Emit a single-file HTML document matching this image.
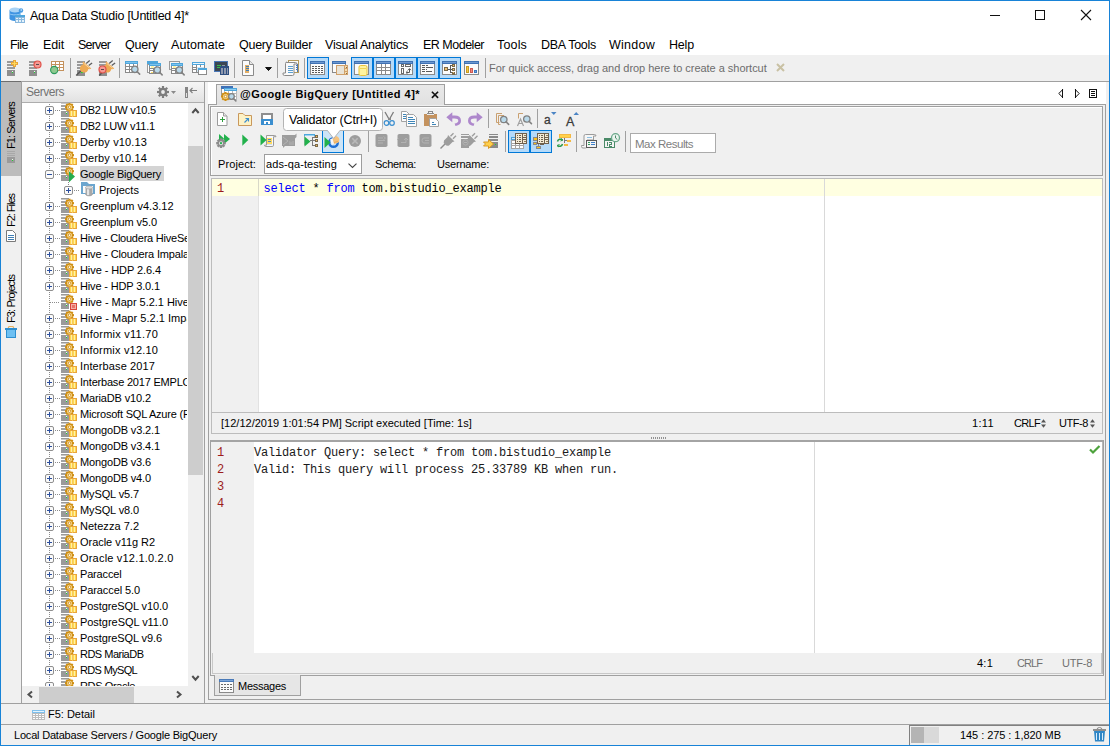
<!DOCTYPE html>
<html><head><meta charset="utf-8"><title>Aqua Data Studio</title>
<style>
*{box-sizing:border-box;margin:0;padding:0}
html,body{width:1110px;height:746px;overflow:hidden;background:#f0f0f0}
body{font-family:"Liberation Sans",sans-serif;font-size:11px;color:#000;position:relative}
.a{position:absolute}
.t{position:absolute;white-space:nowrap;line-height:16px;height:16px}
.m{font-family:"Liberation Mono",monospace}
svg{position:absolute;overflow:visible}
.sb{position:absolute;width:22px;height:22px;border:1px solid #0078d7;background:#b5daf9}
</style></head><body>

<!-- window frame -->
<div class="a" style="left:0px;top:0px;width:1110px;height:746px;background:#f0f0f0;border:1px solid #1883d7;"></div>
<div class="a" style="left:1px;top:1px;width:1108px;height:31px;background:#fff;"></div>
<svg style="left:9px;top:7px" width="16" height="16" viewBox="0 0 16 16" shape-rendering="crispEdges"><g shape-rendering="geometricPrecision"><path d="M0.500 3v8.500c0 1.400 2.400 2.500 5.500 2.500s5.500-1.100 5.500-2.500v-8.500z" fill="#3f94e2"/><ellipse cx="6" cy="3" rx="5.500" ry="2.500" fill="#a9d3f5"/><path d="M0.800 6.800c1.200 1.400 9.200 1.400 10.400 0" stroke="#9fd0f6" stroke-width="0.900" fill="none"/><circle cx="12" cy="3.500" r="2.200" fill="#4a9be0"/><circle cx="12.300" cy="3" r="0.900" fill="#a9d3f5"/></g><rect x="6" y="8" width="10" height="8" fill="#8ab8de"/><rect x="6" y="8" width="10" height="2" fill="#4ea6dc"/><rect x="7" y="11" width="2" height="1" fill="#e4f3fc"/><rect x="10" y="11" width="2" height="1" fill="#e4f3fc"/><rect x="13" y="11" width="2" height="1" fill="#e4f3fc"/><rect x="7" y="13" width="2" height="2" fill="#e4f3fc"/><rect x="10" y="13" width="2" height="2" fill="#e4f3fc"/><rect x="13" y="13" width="2" height="2" fill="#e4f3fc"/></svg>
<div class="t" style="left:30px;top:8px;font-size:12.5px;letter-spacing:-0.24px;">Aqua Data Studio [Untitled 4]*</div>
<div class="a" style="left:990px;top:15px;width:10px;height:1px;background:#111;"></div>
<div class="a" style="left:1035px;top:10px;width:10px;height:10px;border:1px solid #111;"></div>
<svg style="left:1081px;top:10px" width="10" height="10" viewBox="0 0 10 10"><path d="M0 0L10 10M10 0L0 10" stroke="#111" stroke-width="1.1" shape-rendering="geometricPrecision"/></svg>
<div class="a" style="left:1px;top:32px;width:1108px;height:23px;background:#fff;"></div>
<div class="t" style="left:10px;top:37px;font-size:12.5px;letter-spacing:-0.54px;">File</div>
<div class="t" style="left:43px;top:37px;font-size:12.5px;letter-spacing:-0.14px;">Edit</div>
<div class="t" style="left:78px;top:37px;font-size:12.5px;letter-spacing:-0.80px;">Server</div>
<div class="t" style="left:125px;top:37px;font-size:12.5px;letter-spacing:-0.21px;">Query</div>
<div class="t" style="left:171px;top:37px;font-size:12.5px;letter-spacing:0.06px;">Automate</div>
<div class="t" style="left:239px;top:37px;font-size:12.5px;letter-spacing:-0.26px;">Query Builder</div>
<div class="t" style="left:325px;top:37px;font-size:12.5px;letter-spacing:-0.23px;">Visual Analytics</div>
<div class="t" style="left:423px;top:37px;font-size:12.5px;letter-spacing:-0.50px;">ER Modeler</div>
<div class="t" style="left:497px;top:37px;font-size:12.5px;letter-spacing:0.16px;">Tools</div>
<div class="t" style="left:541px;top:37px;font-size:12.5px;letter-spacing:-0.27px;">DBA Tools</div>
<div class="t" style="left:609px;top:37px;font-size:12.5px;letter-spacing:0.26px;">Window</div>
<div class="t" style="left:669px;top:37px;font-size:12.5px;letter-spacing:-0.18px;">Help</div>
<div class="a" style="left:1px;top:55px;width:1108px;height:26px;background:#f0f0f0;"></div>
<div class="a" style="left:1px;top:81px;width:1108px;height:1px;background:#a0a0a0;"></div>
<svg style="left:7px;top:60px" width="16" height="16" viewBox="0 0 16 16" shape-rendering="crispEdges"><rect x="0" y="1" width="8" height="2" fill="#9a9a9a"/><rect x="0" y="4" width="8" height="2" fill="#9a9a9a"/><rect x="0" y="7" width="8" height="2" fill="#9a9a9a"/><rect x="0" y="10" width="8" height="6" fill="#8e8e8e"/><rect x="5" y="11" width="1" height="1" fill="#e8f8e8"/><rect x="5" y="12" width="1" height="1" fill="#1fd12f"/><rect x="6" y="0" width="3" height="7" fill="#e8a63a"/><rect x="4" y="2" width="7" height="3" fill="#e8a63a"/><rect x="7" y="1" width="1" height="5" fill="#ffd95a"/><rect x="5" y="3" width="5" height="1" fill="#ffd95a"/></svg>
<svg style="left:29px;top:60px" width="16" height="16" viewBox="0 0 16 16" shape-rendering="crispEdges"><rect x="0" y="1" width="8" height="2" fill="#9a9a9a"/><rect x="0" y="4" width="8" height="2" fill="#9a9a9a"/><rect x="0" y="7" width="8" height="2" fill="#9a9a9a"/><rect x="0" y="10" width="8" height="6" fill="#8e8e8e"/><rect x="5" y="11" width="1" height="1" fill="#e8f8e8"/><rect x="5" y="12" width="1" height="1" fill="#1fd12f"/><circle cx="8.5" cy="4.5" r="3.5" fill="#f59a94" stroke="#e0524a" stroke-width="1.2" shape-rendering="geometricPrecision"/><rect x="7.0" y="4.0" width="3" height="1" fill="#5a4a4a"/></svg>
<svg style="left:50px;top:60px" width="16" height="16" viewBox="0 0 16 16" shape-rendering="crispEdges"><rect x="1" y="1" width="13" height="10" fill="#c4915c"/><rect x="2.0" y="2.0" width="3.0" height="2.0" fill="#fff"/><rect x="2.0" y="5.0" width="3.0" height="2.0" fill="#fff"/><rect x="2.0" y="8.0" width="3.0" height="2.0" fill="#fff"/><rect x="6.0" y="2.0" width="3.0" height="2.0" fill="#fff"/><rect x="6.0" y="5.0" width="3.0" height="2.0" fill="#fff"/><rect x="6.0" y="8.0" width="3.0" height="2.0" fill="#fff"/><rect x="10.0" y="2.0" width="3.0" height="2.0" fill="#fff"/><rect x="10.0" y="5.0" width="3.0" height="2.0" fill="#fff"/><rect x="10.0" y="8.0" width="3.0" height="2.0" fill="#fff"/><circle cx="4.2" cy="10" r="3.6" fill="#8fc98f" stroke="#2c9a5c" stroke-width="1.1" shape-rendering="geometricPrecision"/></svg>
<div class="a" style="left:70px;top:58px;width:1px;height:20px;background:#a0a0a0;"></div>
<svg style="left:76px;top:60px" width="16" height="16" viewBox="0 0 16 16" shape-rendering="crispEdges"><rect x="1" y="1" width="8" height="2" fill="#9a9a9a"/><rect x="1" y="4" width="8" height="2" fill="#9a9a9a"/><rect x="1" y="7" width="8" height="2" fill="#9a9a9a"/><rect x="1" y="10" width="8" height="6" fill="#8e8e8e"/><rect x="6" y="11" width="1" height="1" fill="#e8f8e8"/><rect x="6" y="12" width="1" height="1" fill="#1fd12f"/><g shape-rendering="geometricPrecision" transform="translate(0 0)"><path d="M10.200 3.600l3.500-3M12.700 5.600l3.400-2.700" stroke="#5f5f5f" stroke-width="1.300" fill="none"/><path d="M0.200 15.500L5 10.700" stroke="#555" stroke-width="1.500" fill="none"/><path d="M7.300 1.600L15.300 8.400L13.600 9.200L12.400 9Q11.500 12.800 7.800 12.600Q4 12.300 3.900 8.600Q3.800 6 7 4.400L6.600 2.600Z" fill="#eeaa54"/><path d="M7.600 3.200L13.600 8.200" stroke="#f8d9a8" stroke-width="0.900" fill="none"/></g><rect x="5" y="12" width="1" height="1" fill="#1fd12f"/></svg>
<svg style="left:98px;top:60px" width="16" height="16" viewBox="0 0 16 16" shape-rendering="crispEdges"><rect x="1" y="1" width="8" height="2" fill="#9a9a9a"/><rect x="1" y="4" width="8" height="2" fill="#9a9a9a"/><rect x="1" y="7" width="8" height="2" fill="#9a9a9a"/><rect x="1" y="10" width="8" height="6" fill="#8e8e8e"/><rect x="6" y="11" width="1" height="1" fill="#e8f8e8"/><rect x="6" y="12" width="1" height="1" fill="#1fd12f"/><g shape-rendering="geometricPrecision" transform="translate(1 0)"><path d="M10.200 3.600l3.500-3M12.700 5.600l3.400-2.700" stroke="#5f5f5f" stroke-width="1.300" fill="none"/><path d="M0.200 15.500L5 10.700" stroke="#555" stroke-width="1.500" fill="none"/><path d="M7.300 1.600L15.300 8.400L13.600 9.200L12.400 9Q11.500 12.800 7.800 12.600Q4 12.300 3.900 8.600Q3.800 6 7 4.400L6.600 2.600Z" fill="#eeaa54"/><path d="M7.600 3.200L13.600 8.200" stroke="#f8d9a8" stroke-width="0.900" fill="none"/></g><circle cx="4.5" cy="9.5" r="3.5" fill="#f59a94" stroke="#e0524a" stroke-width="1.2" shape-rendering="geometricPrecision"/><rect x="3.0" y="9.0" width="3" height="1" fill="#5a4a4a"/></svg>
<div class="a" style="left:119px;top:58px;width:1px;height:20px;background:#a0a0a0;"></div>
<svg style="left:125px;top:60px" width="16" height="16" viewBox="0 0 16 16" shape-rendering="crispEdges"><rect x="0" y="3" width="13" height="10" fill="#8a8a8a"/><rect x="1.0" y="4.0" width="3.0" height="2.0" fill="#fff"/><rect x="1.0" y="7.0" width="3.0" height="2.0" fill="#fff"/><rect x="1.0" y="10.0" width="3.0" height="2.0" fill="#fff"/><rect x="5.0" y="4.0" width="3.0" height="2.0" fill="#fff"/><rect x="5.0" y="7.0" width="3.0" height="2.0" fill="#fff"/><rect x="5.0" y="10.0" width="3.0" height="2.0" fill="#fff"/><rect x="9.0" y="4.0" width="3.0" height="2.0" fill="#fff"/><rect x="9.0" y="7.0" width="3.0" height="2.0" fill="#fff"/><rect x="9.0" y="10.0" width="3.0" height="2.0" fill="#fff"/><rect x="0" y="1" width="13" height="3" fill="#4ea6dc"/><rect x="1" y="2" width="11" height="1" fill="#7cc2ec"/><g shape-rendering="geometricPrecision"><circle cx="9.8" cy="9.3" r="3.2" fill="#b9d9ea" stroke="#828282" stroke-width="1.3"/><path d="M12.040000000000001 11.540000000000001l2.6 2.6" stroke="#828282" stroke-width="1.6" stroke-linecap="round"/></g></svg>
<svg style="left:147px;top:60px" width="16" height="16" viewBox="0 0 16 16" shape-rendering="crispEdges"><rect x="0" y="1" width="11" height="3" fill="#4ea6dc"/><rect x="0" y="4" width="2" height="9" fill="#9a9a9a"/><rect x="1" y="5" width="1" height="7" fill="#fff"/><rect x="2" y="5" width="12" height="9" fill="#8a8a8a"/><rect x="3.0" y="6.0" width="2.6666666666666665" height="1.6666666666666665" fill="#fff"/><rect x="3.0" y="8.666666666666666" width="2.6666666666666665" height="1.6666666666666665" fill="#fff"/><rect x="3.0" y="11.333333333333332" width="2.6666666666666665" height="1.6666666666666665" fill="#fff"/><rect x="6.666666666666666" y="6.0" width="2.6666666666666665" height="1.6666666666666665" fill="#fff"/><rect x="6.666666666666666" y="8.666666666666666" width="2.6666666666666665" height="1.6666666666666665" fill="#fff"/><rect x="6.666666666666666" y="11.333333333333332" width="2.6666666666666665" height="1.6666666666666665" fill="#fff"/><rect x="10.333333333333332" y="6.0" width="2.6666666666666665" height="1.6666666666666665" fill="#fff"/><rect x="10.333333333333332" y="8.666666666666666" width="2.6666666666666665" height="1.6666666666666665" fill="#fff"/><rect x="10.333333333333332" y="11.333333333333332" width="2.6666666666666665" height="1.6666666666666665" fill="#fff"/><rect x="2" y="3" width="12" height="3" fill="#4ea6dc"/><rect x="3" y="4" width="10" height="1" fill="#7cc2ec"/><rect x="4" y="6" width="3" height="2" fill="#fff3a8"/><rect x="4" y="12" width="2" height="1" fill="#ffe066"/><g shape-rendering="geometricPrecision"><circle cx="10.3" cy="10.0" r="3.2" fill="#b9d9ea" stroke="#828282" stroke-width="1.3"/><path d="M12.540000000000001 12.24l2.6 2.6" stroke="#828282" stroke-width="1.6" stroke-linecap="round"/></g></svg>
<svg style="left:169px;top:60px" width="16" height="16" viewBox="0 0 16 16" shape-rendering="crispEdges"><rect x="0" y="1" width="11" height="9" fill="#9a9a9a"/><rect x="1" y="2" width="9" height="7" fill="#f4f4f4"/><rect x="2" y="5" width="12" height="9" fill="#8a8a8a"/><rect x="3.0" y="6.0" width="2.6666666666666665" height="1.6666666666666665" fill="#fff"/><rect x="3.0" y="8.666666666666666" width="2.6666666666666665" height="1.6666666666666665" fill="#fff"/><rect x="3.0" y="11.333333333333332" width="2.6666666666666665" height="1.6666666666666665" fill="#fff"/><rect x="6.666666666666666" y="6.0" width="2.6666666666666665" height="1.6666666666666665" fill="#fff"/><rect x="6.666666666666666" y="8.666666666666666" width="2.6666666666666665" height="1.6666666666666665" fill="#fff"/><rect x="6.666666666666666" y="11.333333333333332" width="2.6666666666666665" height="1.6666666666666665" fill="#fff"/><rect x="10.333333333333332" y="6.0" width="2.6666666666666665" height="1.6666666666666665" fill="#fff"/><rect x="10.333333333333332" y="8.666666666666666" width="2.6666666666666665" height="1.6666666666666665" fill="#fff"/><rect x="10.333333333333332" y="11.333333333333332" width="2.6666666666666665" height="1.6666666666666665" fill="#fff"/><rect x="2" y="3" width="12" height="3" fill="#4ea6dc"/><rect x="3" y="4" width="10" height="1" fill="#7cc2ec"/><rect x="4" y="6" width="3" height="2" fill="#fff3a8"/><g shape-rendering="geometricPrecision"><circle cx="10.3" cy="10.0" r="3.2" fill="#b9d9ea" stroke="#828282" stroke-width="1.3"/><path d="M12.540000000000001 12.24l2.6 2.6" stroke="#828282" stroke-width="1.6" stroke-linecap="round"/></g></svg>
<svg style="left:192px;top:60px" width="16" height="16" viewBox="0 0 16 16" shape-rendering="crispEdges"><rect x="0" y="4" width="13" height="9" fill="#8a8a8a"/><rect x="1.0" y="5.0" width="3.0" height="1.6666666666666665" fill="#fff"/><rect x="1.0" y="7.666666666666666" width="3.0" height="1.6666666666666665" fill="#fff"/><rect x="1.0" y="10.333333333333332" width="3.0" height="1.6666666666666665" fill="#fff"/><rect x="5.0" y="5.0" width="3.0" height="1.6666666666666665" fill="#fff"/><rect x="5.0" y="7.666666666666666" width="3.0" height="1.6666666666666665" fill="#fff"/><rect x="5.0" y="10.333333333333332" width="3.0" height="1.6666666666666665" fill="#fff"/><rect x="9.0" y="5.0" width="3.0" height="1.6666666666666665" fill="#fff"/><rect x="9.0" y="7.666666666666666" width="3.0" height="1.6666666666666665" fill="#fff"/><rect x="9.0" y="10.333333333333332" width="3.0" height="1.6666666666666665" fill="#fff"/><rect x="0" y="2" width="13" height="3" fill="#4ea6dc"/><rect x="1" y="3" width="11" height="1" fill="#7cc2ec"/><rect x="1" y="3" width="11" height="1" fill="#e8f4fc"/><rect x="5" y="7" width="7" height="5" fill="#cfe6f5"/><rect x="6" y="8" width="9" height="7" fill="#8a8a8a"/><rect x="7" y="10" width="7" height="4" fill="#fff"/><rect x="6" y="8" width="9" height="2" fill="#4ea6dc"/></svg>
<svg style="left:214px;top:60px" width="16" height="16" viewBox="0 0 16 16" shape-rendering="crispEdges"><rect x="0" y="1" width="14" height="11" fill="#4a78b8"/><rect x="1" y="2" width="12" height="9" fill="#3c4654"/><rect x="3" y="5" width="4" height="1" fill="#35c24a"/><rect x="3" y="7" width="4" height="1" fill="#35c24a"/><rect x="8" y="5" width="3" height="1" fill="#8a95a5"/><rect x="6" y="6" width="9" height="9" fill="#2f4f80"/><rect x="7" y="8" width="7" height="6" fill="#8e98ae"/><rect x="9" y="8" width="1" height="6" fill="#2f4f80"/><rect x="11.5" y="8" width="1" height="6" fill="#2f4f80"/></svg>
<div class="a" style="left:234px;top:58px;width:1px;height:20px;background:#a0a0a0;"></div>
<svg style="left:241px;top:60px" width="16" height="16" viewBox="0 0 16 16" shape-rendering="crispEdges"><path d="M1.5 0.5h7l4 4v11h-11z" fill="#fbfbfb" stroke="#8a8a8a" shape-rendering="geometricPrecision"/><path d="M8.5 0.5v4h4" fill="#e8e8e8" stroke="#8a8a8a" shape-rendering="geometricPrecision"/><rect x="4" y="5" width="4" height="8" fill="#e3ae66"/><rect x="5" y="6" width="3" height="1" fill="#3f7fb5"/><rect x="5" y="8" width="3" height="1" fill="#3f7fb5"/><rect x="5" y="10" width="3" height="1" fill="#3f7fb5"/></svg>
<svg style="left:265px;top:67px" width="7" height="4" viewBox="0 0 7 4" shape-rendering="crispEdges"><rect x="0" y="0" width="7" height="1" fill="#555"/><rect x="1" y="0" width="5" height="1" fill="#111"/><rect x="1" y="1" width="5" height="1" fill="#111"/><rect x="2" y="2" width="3" height="1" fill="#111"/><rect x="3" y="3" width="1" height="1" fill="#333"/></svg>
<div class="a" style="left:277px;top:58px;width:1px;height:20px;background:#a0a0a0;"></div>
<svg style="left:283px;top:60px" width="16" height="16" viewBox="0 0 16 16" shape-rendering="crispEdges"><rect x="5" y="0" width="11" height="13" fill="#b39a5c"/><rect x="6" y="1" width="9" height="11" fill="#fbfbfb"/><rect x="13" y="5" width="1" height="1" fill="#4a78b8"/><rect x="13" y="7" width="1" height="1" fill="#4a78b8"/><rect x="13" y="9" width="1" height="1" fill="#4a78b8"/><rect x="14" y="4" width="1" height="8" fill="#4a78b8"/><path d="M3.5 2.5h9q1.5 0 1.5 1.5h-3v10q0 1.5-1.5 1.5h-8q-1.5 0-1.5-1.5v-1h2.5v-9.5q0-1.5 1.5-1.5z" fill="#fafafa" stroke="#8a8a8a" shape-rendering="geometricPrecision"/><rect x="5" y="6" width="5" height="1" fill="#5b9fd0"/><rect x="5" y="8" width="5" height="1" fill="#5b9fd0"/><rect x="5" y="10" width="5" height="1" fill="#5b9fd0"/><rect x="5" y="12" width="5" height="1" fill="#5b9fd0"/></svg>
<div class="a" style="left:304px;top:58px;width:1px;height:20px;background:#a0a0a0;"></div>
<div class="sb" style="left:307px;top:57px"></div>
<div class="sb" style="left:351px;top:57px"></div>
<div class="sb" style="left:373px;top:57px"></div>
<div class="sb" style="left:395px;top:57px"></div>
<div class="sb" style="left:417px;top:57px"></div>
<div class="sb" style="left:439px;top:57px"></div>
<svg style="left:310px;top:60px" width="16" height="16" viewBox="0 0 16 16" shape-rendering="crispEdges"><rect x="0" y="1" width="15" height="14" fill="#8a8a8a"/><rect x="1" y="2" width="13" height="12" fill="#fbfbfb"/><rect x="0" y="1" width="15" height="3" fill="#3f72b4"/><rect x="1" y="2" width="13" height="1" fill="#6d98cf"/><rect x="2" y="6" width="2" height="1" fill="#5a5a5a"/><rect x="5" y="6" width="2" height="1" fill="#5a5a5a"/><rect x="8" y="6" width="2" height="1" fill="#5a5a5a"/><rect x="11" y="6" width="2" height="1" fill="#5a5a5a"/><rect x="2" y="8" width="2" height="1" fill="#5a5a5a"/><rect x="5" y="8" width="2" height="1" fill="#5a5a5a"/><rect x="8" y="8" width="2" height="1" fill="#5a5a5a"/><rect x="11" y="8" width="2" height="1" fill="#5a5a5a"/><rect x="2" y="10" width="2" height="1" fill="#5a5a5a"/><rect x="5" y="10" width="2" height="1" fill="#5a5a5a"/><rect x="8" y="10" width="2" height="1" fill="#5a5a5a"/><rect x="11" y="10" width="2" height="1" fill="#5a5a5a"/><rect x="2" y="12" width="2" height="1" fill="#5a5a5a"/><rect x="5" y="12" width="2" height="1" fill="#5a5a5a"/><rect x="8" y="12" width="2" height="1" fill="#5a5a5a"/><rect x="11" y="12" width="2" height="1" fill="#5a5a5a"/></svg>
<svg style="left:332px;top:60px" width="16" height="16" viewBox="0 0 16 16" shape-rendering="crispEdges"><rect x="0" y="1" width="14" height="12" fill="#8a8a8a"/><rect x="1" y="2" width="12" height="10" fill="#fbfbfb"/><rect x="0" y="1" width="14" height="3" fill="#3f72b4"/><rect x="1" y="2" width="12" height="1" fill="#6d98cf"/><rect x="4" y="5" width="12" height="10" fill="#d0a06a"/><rect x="5" y="6" width="7" height="8" fill="#e9e3d6"/><rect x="13" y="6" width="2" height="2" fill="#f3dcae"/><rect x="13" y="9" width="2" height="2" fill="#f3dcae"/><rect x="13" y="12" width="2" height="2" fill="#f3dcae"/><rect x="13.5" y="6.6" width="1" height="1" fill="#8a6a3a"/><rect x="13.5" y="12.6" width="1" height="1" fill="#8a6a3a"/></svg>
<svg style="left:354px;top:60px" width="16" height="16" viewBox="0 0 16 16" shape-rendering="crispEdges"><rect x="0" y="1" width="15" height="14" fill="#8a8a8a"/><rect x="1" y="2" width="13" height="12" fill="#fbfbfb"/><rect x="0" y="1" width="15" height="3" fill="#3f72b4"/><rect x="1" y="2" width="13" height="1" fill="#6d98cf"/><rect x="5" y="5.5" width="8" height="10" rx="1.6" fill="#fff4a0" stroke="#e9c43c" stroke-width="1" shape-rendering="geometricPrecision"/><rect x="6" y="8" width="6" height="1" fill="#f0d558"/></svg>
<svg style="left:376px;top:60px" width="16" height="16" viewBox="0 0 16 16" shape-rendering="crispEdges"><rect x="0" y="1" width="15" height="14" fill="#8a8a8a"/><rect x="0" y="1" width="15" height="3" fill="#3f72b4"/><rect x="1" y="2" width="13" height="1" fill="#6d98cf"/><rect x="1" y="4" width="4" height="3" fill="#fff"/><rect x="1" y="8" width="4" height="2" fill="#fff"/><rect x="1" y="11" width="4" height="3" fill="#fff"/><rect x="6" y="4" width="3" height="3" fill="#fff"/><rect x="6" y="8" width="3" height="2" fill="#fff"/><rect x="6" y="11" width="3" height="3" fill="#fff"/><rect x="10" y="4" width="4" height="3" fill="#fff"/><rect x="10" y="8" width="4" height="2" fill="#fff"/><rect x="10" y="11" width="4" height="3" fill="#fff"/></svg>
<svg style="left:398px;top:60px" width="16" height="16" viewBox="0 0 16 16" shape-rendering="crispEdges"><rect x="0" y="1" width="15" height="14" fill="#8a8a8a"/><rect x="1" y="2" width="13" height="12" fill="#fbfbfb"/><rect x="0" y="1" width="15" height="3" fill="#3f72b4"/><rect x="1" y="2" width="13" height="1" fill="#6d98cf"/><rect x="3" y="4" width="3" height="3" fill="#6a6a6a"/><rect x="4" y="5" width="1" height="1" fill="#fff"/><rect x="7" y="4" width="6" height="3" fill="#6a6a6a"/><rect x="8" y="5" width="4" height="1" fill="#fff"/><rect x="3" y="8" width="3" height="6" fill="#6a6a6a"/><rect x="4" y="9" width="1" height="4" fill="#fff"/><path d="M8.500 12.500h3v-3.500M10 10.200l1.500-1.600l1.500 1.600M9.600 11l-1.600 1.500l1.600 1.500" fill="none" stroke="#5a5a5a" stroke-width="1" shape-rendering="geometricPrecision"/></svg>
<svg style="left:420px;top:60px" width="16" height="16" viewBox="0 0 16 16" shape-rendering="crispEdges"><rect x="0" y="1" width="15" height="14" fill="#8a8a8a"/><rect x="1" y="2" width="13" height="12" fill="#fbfbfb"/><rect x="0" y="1" width="15" height="3" fill="#3f72b4"/><rect x="1" y="2" width="13" height="1" fill="#6d98cf"/><rect x="2" y="5" width="3" height="1" fill="#5a5a5a"/><rect x="6" y="5" width="2" height="1" fill="#5a5a5a"/><rect x="2" y="7" width="3" height="1" fill="#5a5a5a"/><rect x="6" y="7" width="7" height="1" fill="#5a5a5a"/><rect x="2" y="9" width="3" height="1" fill="#5a5a5a"/><rect x="6" y="9" width="1" height="1" fill="#5a5a5a"/><rect x="2" y="11" width="3" height="1" fill="#5a5a5a"/><rect x="6" y="11" width="6" height="1" fill="#5a5a5a"/></svg>
<svg style="left:442px;top:60px" width="16" height="16" viewBox="0 0 16 16" shape-rendering="crispEdges"><rect x="0" y="1" width="15" height="14" fill="#8a8a8a"/><rect x="1" y="2" width="13" height="12" fill="#fbfbfb"/><rect x="0" y="1" width="15" height="3" fill="#3f72b4"/><rect x="1" y="2" width="13" height="1" fill="#6d98cf"/><rect x="2" y="7" width="4" height="4" fill="#7a6a4a"/><rect x="3" y="8" width="2" height="2" fill="#f2c070"/><rect x="6" y="9" width="2" height="1" fill="#5a5a5a"/><rect x="8" y="5" width="1" height="8" fill="#5a5a5a"/><rect x="8" y="5" width="3" height="1" fill="#5a5a5a"/><rect x="8" y="12" width="3" height="1" fill="#5a5a5a"/><rect x="8" y="9" width="3" height="1" fill="#5a5a5a"/><rect x="10" y="4" width="3" height="3" fill="#7a6a4a"/><rect x="11" y="5" width="1" height="1" fill="#f2c070"/><rect x="10" y="8" width="3" height="3" fill="#7a6a4a"/><rect x="11" y="9" width="1" height="1" fill="#f2c070"/><rect x="10" y="11.5" width="3" height="3" fill="#7a6a4a"/><rect x="11" y="12.3" width="1" height="1" fill="#f2c070"/></svg>
<svg style="left:464px;top:60px" width="16" height="16" viewBox="0 0 16 16" shape-rendering="crispEdges"><rect x="0" y="1" width="15" height="14" fill="#8a8a8a"/><rect x="1" y="2" width="13" height="12" fill="#fbfbfb"/><rect x="0" y="1" width="15" height="3" fill="#3f72b4"/><rect x="1" y="2" width="13" height="1" fill="#6d98cf"/><rect x="2" y="6" width="3" height="7" fill="#c89a20"/><rect x="3" y="7" width="1" height="5" fill="#f6c744"/><rect x="6" y="8" width="3" height="5" fill="#d05a52"/><rect x="7" y="9" width="1" height="3" fill="#f08a80"/><rect x="10" y="10" width="3" height="3" fill="#3d78c0"/><rect x="11" y="11" width="1" height="1" fill="#7aa8e0"/></svg>
<div class="a" style="left:485px;top:58px;width:1px;height:20px;background:#a0a0a0;"></div>
<div class="t" style="left:489px;top:60px;font-size:11px;color:#6d6d6d;letter-spacing:-0.03px;">For quick access, drag and drop here to create a shortcut</div>
<svg style="left:776px;top:63px" width="9" height="9" viewBox="0 0 9 9"><path d="M1 1L8 8M8 1L1 8" stroke="#c9c1a4" stroke-width="2" shape-rendering="geometricPrecision"/></svg>
<div class="a" style="left:1px;top:82px;width:20px;height:621px;background:#f0f0f0;"></div>
<div class="a" style="left:21px;top:82px;width:1px;height:621px;background:#a0a0a0;"></div>
<div class="a" style="left:1px;top:82px;width:20px;height:94px;background:#bcbcbc;"></div>
<div class="a" style="left:1px;top:81px;width:20px;height:1px;background:#6e6e6e;"></div>
<div class="t" style="left:3px;top:149px;font-size:11px;letter-spacing:-0.90px;transform-origin:0 0;transform:rotate(-90deg);">F1: Servers</div>
<svg style="left:7px;top:151px" width="8" height="12" viewBox="0 0 8 12" shape-rendering="crispEdges"><rect x="0" y="0" width="8" height="1" fill="#a8a8a8"/><rect x="0" y="2" width="8" height="1" fill="#a8a8a8"/><rect x="0" y="4" width="8" height="1" fill="#a8a8a8"/><rect x="0" y="6" width="8" height="6" fill="#9a9a9a"/><rect x="5" y="8" width="1" height="1" fill="#e8ffe8"/><rect x="5" y="9" width="1" height="1" fill="#1fd12f"/></svg>
<div class="t" style="left:3px;top:227px;font-size:11px;letter-spacing:-1.02px;transform-origin:0 0;transform:rotate(-90deg);">F2: Files</div>
<svg style="left:6px;top:230px" width="10" height="12" viewBox="0 0 10 12" shape-rendering="crispEdges"><path d="M0.500 0.500h6l3 3v8h-9z" fill="#fff" stroke="#7a7a7a" shape-rendering="geometricPrecision"/><rect x="2" y="5" width="6" height="1" fill="#3f7fb5"/><rect x="2" y="7" width="6" height="1" fill="#3f7fb5"/><rect x="2" y="9" width="6" height="1" fill="#3f7fb5"/></svg>
<div class="t" style="left:3px;top:323px;font-size:11px;letter-spacing:-0.89px;transform-origin:0 0;transform:rotate(-90deg);">F3: Projects</div>
<svg style="left:5px;top:326px" width="12" height="12" viewBox="0 0 12 12" shape-rendering="crispEdges"><path d="M3 2.500l1-2h4l1 2" fill="none" stroke="#e8b060" stroke-width="1.200" shape-rendering="geometricPrecision"/><rect x="0" y="2" width="12" height="2" fill="#2e8fd0"/><rect x="1" y="4" width="10" height="8" fill="#2e8fd0"/><rect x="2" y="4" width="8" height="7" fill="#6ec0f2"/></svg>
<div class="a" style="left:1px;top:703px;width:1108px;height:1px;background:#a0a0a0;"></div>
<div class="a" style="left:1px;top:704px;width:1108px;height:20px;background:#f0f0f0;"></div>
<svg style="left:32px;top:710px" width="13" height="10" viewBox="0 0 13 10" shape-rendering="crispEdges"><rect x="0" y="0" width="13" height="10" fill="#bdbdbd"/><rect x="0" y="0" width="13" height="3" fill="#7fc0ec"/><rect x="1" y="1" width="11" height="1" fill="#e4f4ff"/><rect x="1" y="4" width="2" height="1" fill="#fff"/><rect x="1" y="6" width="2" height="1" fill="#fff"/><rect x="1" y="8" width="2" height="1" fill="#fff"/><rect x="4" y="4" width="2" height="1" fill="#fff"/><rect x="4" y="6" width="2" height="1" fill="#fff"/><rect x="4" y="8" width="2" height="1" fill="#fff"/><rect x="7" y="4" width="2" height="1" fill="#fff"/><rect x="7" y="6" width="2" height="1" fill="#fff"/><rect x="7" y="8" width="2" height="1" fill="#fff"/><rect x="10" y="4" width="2" height="1" fill="#fff"/><rect x="10" y="6" width="2" height="1" fill="#fff"/><rect x="10" y="8" width="2" height="1" fill="#fff"/></svg>
<div class="t" style="left:48px;top:706px;font-size:11px;letter-spacing:-0.01px;">F5: Detail</div>
<div class="a" style="left:1px;top:724px;width:1108px;height:1px;background:#a0a0a0;"></div>
<div class="a" style="left:1px;top:725px;width:1108px;height:20px;background:#f0f0f0;"></div>
<div class="t" style="left:14px;top:727px;font-size:11px;letter-spacing:-0.20px;">Local Database Servers / Google BigQuery</div>
<div class="a" style="left:909px;top:725px;width:200px;height:1px;background:#808080;"></div>
<div class="a" style="left:909px;top:725px;width:1px;height:20px;background:#808080;"></div>
<div class="a" style="left:911px;top:727px;width:13px;height:16px;background:#b4b4b4;"></div>
<div class="a" style="left:924px;top:727px;width:15px;height:16px;background:#d9d9d9;"></div>
<div class="t" style="left:960px;top:727px;font-size:11px;letter-spacing:-0.06px;">145 : 275 : 1,820 MB</div>
<svg style="left:1093px;top:727px" width="13" height="15" viewBox="0 0 13 15" shape-rendering="crispEdges"><path d="M4 2.500q0-2 2.500-2t2.500 2" fill="none" stroke="#8a8a8a" stroke-width="1" shape-rendering="geometricPrecision"/><rect x="0" y="2" width="13" height="2" fill="#8e8e8e"/><path d="M1 4h11l-1 10.500h-9z" fill="#2f86c6" shape-rendering="geometricPrecision"/><rect x="3" y="6" width="1" height="7" fill="#d8ecfa"/><rect x="6" y="6" width="1" height="7" fill="#d8ecfa"/><rect x="9" y="6" width="1" height="7" fill="#d8ecfa"/></svg>
<div class="a" style="left:22px;top:82px;width:182px;height:20px;background:linear-gradient(#f6f6f6,#e2e2e2);"></div>
<div class="t" style="left:26px;top:84px;font-size:12px;color:#747474;letter-spacing:-0.48px;">Servers</div>
<svg style="left:157px;top:86px" width="12" height="12" viewBox="0 0 12 12"><g shape-rendering="geometricPrecision" fill="#7d7d7d"><circle cx="6" cy="6" r="4.300"/><rect x="4.900" y="0" width="2.200" height="12" transform="rotate(0 6 6)"/><rect x="4.900" y="0" width="2.200" height="12" transform="rotate(45 6 6)"/><rect x="4.900" y="0" width="2.200" height="12" transform="rotate(90 6 6)"/><rect x="4.900" y="0" width="2.200" height="12" transform="rotate(135 6 6)"/><circle cx="6" cy="6" r="1.900" fill="#ececec"/></g></svg>
<svg style="left:171px;top:91px" width="5" height="3" viewBox="0 0 5 3"><path d="M0 0h5l-2.500 3z" fill="#8a8a8a"/></svg>
<svg style="left:185px;top:87px" width="12" height="11" viewBox="0 0 12 11" shape-rendering="crispEdges"><rect x="0" y="0" width="3" height="11" fill="#858585"/><rect x="1" y="6" width="1" height="4" fill="#e2e2e2"/><rect x="5" y="3" width="7" height="1" fill="#7d7d7d"/><path d="M7.500 1L5 3.500L7.500 6" fill="none" stroke="#7d7d7d" stroke-width="1.100" shape-rendering="geometricPrecision"/></svg>
<div class="a" id="tree" style="left:22px;top:102px;width:166px;height:584px;background:#fff;overflow:hidden">
<div class="a" style="left:27px;top:0px;width:1px;height:584px;background:repeating-linear-gradient(#8c8c8c 0 1px,transparent 1px 2px)"></div>
<svg style="left:23px;top:4px" width="9" height="9" viewBox="0 0 9 9" shape-rendering="crispEdges"><rect x="0.500" y="0.500" width="8" height="8" rx="1.500" fill="#fafafa" stroke="#8f8f8f" shape-rendering="geometricPrecision"/><rect x="2" y="4" width="5" height="1" fill="#2c4f9e"/><rect x="4" y="2" width="1" height="5" fill="#2c4f9e"/></svg>
<div class="a" style="left:33px;top:8px;width:5px;height:1px;background:repeating-linear-gradient(90deg,#8c8c8c 0 1px,transparent 1px 2px)"></div>
<svg style="left:39px;top:0px" width="16" height="16" viewBox="0 0 16 16" shape-rendering="crispEdges"><rect x="0" y="0" width="8" height="1" fill="#9a9a9a"/><rect x="0" y="1" width="8" height="1" fill="#c8c8c8"/><rect x="0" y="3" width="8" height="2" fill="#a2a2a2"/><rect x="0" y="6" width="8" height="2" fill="#a2a2a2"/><rect x="0" y="9" width="8" height="6" fill="#9a9a9a"/><rect x="5" y="10" width="1" height="1" fill="#eaffea"/><rect x="5" y="11" width="1" height="1" fill="#1fd12f"/><g shape-rendering="geometricPrecision"><g fill="#cf8f14"><rect x="7.4" y="0.7000000000000002" width="2.200" height="9" transform="rotate(0 8.5 5.2)"/><rect x="7.4" y="0.7000000000000002" width="2.200" height="9" transform="rotate(45 8.5 5.2)"/><rect x="7.4" y="0.7000000000000002" width="2.200" height="9" transform="rotate(90 8.5 5.2)"/><rect x="7.4" y="0.7000000000000002" width="2.200" height="9" transform="rotate(135 8.5 5.2)"/></g><circle cx="8.5" cy="5.2" r="3.400" fill="#cf8f14"/><circle cx="8.5" cy="5.2" r="2.500" fill="#f8d88e"/><circle cx="8.5" cy="5.2" r="1.250" fill="#fff" stroke="#c4840e" stroke-width="0.800"/></g><rect x="8" y="8" width="8" height="7" fill="#e9a53c"/><rect x="9" y="9" width="2" height="5" fill="#ffd84f"/><rect x="10" y="9" width="1" height="5" fill="#fff0a8"/><rect x="11" y="9" width="1" height="6" fill="#f6c85a"/><rect x="12" y="9" width="3" height="5" fill="#ffd84f"/><rect x="13" y="9" width="1" height="5" fill="#fff0a8"/></svg>
<div class="t" style="left:58px;top:0px;font-size:11px;letter-spacing:-0.22px;">DB2 LUW v10.5</div>
<svg style="left:23px;top:20px" width="9" height="9" viewBox="0 0 9 9" shape-rendering="crispEdges"><rect x="0.500" y="0.500" width="8" height="8" rx="1.500" fill="#fafafa" stroke="#8f8f8f" shape-rendering="geometricPrecision"/><rect x="2" y="4" width="5" height="1" fill="#2c4f9e"/><rect x="4" y="2" width="1" height="5" fill="#2c4f9e"/></svg>
<div class="a" style="left:33px;top:24px;width:5px;height:1px;background:repeating-linear-gradient(90deg,#8c8c8c 0 1px,transparent 1px 2px)"></div>
<svg style="left:39px;top:16px" width="16" height="16" viewBox="0 0 16 16" shape-rendering="crispEdges"><rect x="0" y="0" width="8" height="1" fill="#9a9a9a"/><rect x="0" y="1" width="8" height="1" fill="#c8c8c8"/><rect x="0" y="3" width="8" height="2" fill="#a2a2a2"/><rect x="0" y="6" width="8" height="2" fill="#a2a2a2"/><rect x="0" y="9" width="8" height="6" fill="#9a9a9a"/><rect x="5" y="10" width="1" height="1" fill="#eaffea"/><rect x="5" y="11" width="1" height="1" fill="#1fd12f"/><g shape-rendering="geometricPrecision"><g fill="#cf8f14"><rect x="7.4" y="0.7000000000000002" width="2.200" height="9" transform="rotate(0 8.5 5.2)"/><rect x="7.4" y="0.7000000000000002" width="2.200" height="9" transform="rotate(45 8.5 5.2)"/><rect x="7.4" y="0.7000000000000002" width="2.200" height="9" transform="rotate(90 8.5 5.2)"/><rect x="7.4" y="0.7000000000000002" width="2.200" height="9" transform="rotate(135 8.5 5.2)"/></g><circle cx="8.5" cy="5.2" r="3.400" fill="#cf8f14"/><circle cx="8.5" cy="5.2" r="2.500" fill="#f8d88e"/><circle cx="8.5" cy="5.2" r="1.250" fill="#fff" stroke="#c4840e" stroke-width="0.800"/></g><rect x="8" y="8" width="8" height="7" fill="#e9a53c"/><rect x="9" y="9" width="2" height="5" fill="#ffd84f"/><rect x="10" y="9" width="1" height="5" fill="#fff0a8"/><rect x="11" y="9" width="1" height="6" fill="#f6c85a"/><rect x="12" y="9" width="3" height="5" fill="#ffd84f"/><rect x="13" y="9" width="1" height="5" fill="#fff0a8"/></svg>
<div class="t" style="left:58px;top:16px;font-size:11px;letter-spacing:-0.24px;">DB2 LUW v11.1</div>
<svg style="left:23px;top:36px" width="9" height="9" viewBox="0 0 9 9" shape-rendering="crispEdges"><rect x="0.500" y="0.500" width="8" height="8" rx="1.500" fill="#fafafa" stroke="#8f8f8f" shape-rendering="geometricPrecision"/><rect x="2" y="4" width="5" height="1" fill="#2c4f9e"/><rect x="4" y="2" width="1" height="5" fill="#2c4f9e"/></svg>
<div class="a" style="left:33px;top:40px;width:5px;height:1px;background:repeating-linear-gradient(90deg,#8c8c8c 0 1px,transparent 1px 2px)"></div>
<svg style="left:39px;top:32px" width="16" height="16" viewBox="0 0 16 16" shape-rendering="crispEdges"><rect x="0" y="0" width="8" height="1" fill="#9a9a9a"/><rect x="0" y="1" width="8" height="1" fill="#c8c8c8"/><rect x="0" y="3" width="8" height="2" fill="#a2a2a2"/><rect x="0" y="6" width="8" height="2" fill="#a2a2a2"/><rect x="0" y="9" width="8" height="6" fill="#9a9a9a"/><rect x="5" y="10" width="1" height="1" fill="#eaffea"/><rect x="5" y="11" width="1" height="1" fill="#1fd12f"/><g shape-rendering="geometricPrecision"><g fill="#cf8f14"><rect x="7.4" y="0.7000000000000002" width="2.200" height="9" transform="rotate(0 8.5 5.2)"/><rect x="7.4" y="0.7000000000000002" width="2.200" height="9" transform="rotate(45 8.5 5.2)"/><rect x="7.4" y="0.7000000000000002" width="2.200" height="9" transform="rotate(90 8.5 5.2)"/><rect x="7.4" y="0.7000000000000002" width="2.200" height="9" transform="rotate(135 8.5 5.2)"/></g><circle cx="8.5" cy="5.2" r="3.400" fill="#cf8f14"/><circle cx="8.5" cy="5.2" r="2.500" fill="#f8d88e"/><circle cx="8.5" cy="5.2" r="1.250" fill="#fff" stroke="#c4840e" stroke-width="0.800"/></g><rect x="8" y="8" width="8" height="7" fill="#e9a53c"/><rect x="9" y="9" width="2" height="5" fill="#ffd84f"/><rect x="10" y="9" width="1" height="5" fill="#fff0a8"/><rect x="11" y="9" width="1" height="6" fill="#f6c85a"/><rect x="12" y="9" width="3" height="5" fill="#ffd84f"/><rect x="13" y="9" width="1" height="5" fill="#fff0a8"/></svg>
<div class="t" style="left:58px;top:32px;font-size:11px;letter-spacing:0.13px;">Derby v10.13</div>
<svg style="left:23px;top:52px" width="9" height="9" viewBox="0 0 9 9" shape-rendering="crispEdges"><rect x="0.500" y="0.500" width="8" height="8" rx="1.500" fill="#fafafa" stroke="#8f8f8f" shape-rendering="geometricPrecision"/><rect x="2" y="4" width="5" height="1" fill="#2c4f9e"/><rect x="4" y="2" width="1" height="5" fill="#2c4f9e"/></svg>
<div class="a" style="left:33px;top:56px;width:5px;height:1px;background:repeating-linear-gradient(90deg,#8c8c8c 0 1px,transparent 1px 2px)"></div>
<svg style="left:39px;top:48px" width="16" height="16" viewBox="0 0 16 16" shape-rendering="crispEdges"><rect x="0" y="0" width="8" height="1" fill="#9a9a9a"/><rect x="0" y="1" width="8" height="1" fill="#c8c8c8"/><rect x="0" y="3" width="8" height="2" fill="#a2a2a2"/><rect x="0" y="6" width="8" height="2" fill="#a2a2a2"/><rect x="0" y="9" width="8" height="6" fill="#9a9a9a"/><rect x="5" y="10" width="1" height="1" fill="#eaffea"/><rect x="5" y="11" width="1" height="1" fill="#1fd12f"/><g shape-rendering="geometricPrecision"><g fill="#cf8f14"><rect x="7.4" y="0.7000000000000002" width="2.200" height="9" transform="rotate(0 8.5 5.2)"/><rect x="7.4" y="0.7000000000000002" width="2.200" height="9" transform="rotate(45 8.5 5.2)"/><rect x="7.4" y="0.7000000000000002" width="2.200" height="9" transform="rotate(90 8.5 5.2)"/><rect x="7.4" y="0.7000000000000002" width="2.200" height="9" transform="rotate(135 8.5 5.2)"/></g><circle cx="8.5" cy="5.2" r="3.400" fill="#cf8f14"/><circle cx="8.5" cy="5.2" r="2.500" fill="#f8d88e"/><circle cx="8.5" cy="5.2" r="1.250" fill="#fff" stroke="#c4840e" stroke-width="0.800"/></g><rect x="8" y="8" width="8" height="7" fill="#e9a53c"/><rect x="9" y="9" width="2" height="5" fill="#ffd84f"/><rect x="10" y="9" width="1" height="5" fill="#fff0a8"/><rect x="11" y="9" width="1" height="6" fill="#f6c85a"/><rect x="12" y="9" width="3" height="5" fill="#ffd84f"/><rect x="13" y="9" width="1" height="5" fill="#fff0a8"/></svg>
<div class="t" style="left:58px;top:48px;font-size:11px;letter-spacing:0.13px;">Derby v10.14</div>
<div class="a" style="left:58px;top:64px;width:84px;height:15px;background:#d4d4d4;"></div>
<svg style="left:23px;top:68px" width="9" height="9" viewBox="0 0 9 9" shape-rendering="crispEdges"><rect x="0.500" y="0.500" width="8" height="8" rx="1.500" fill="#fafafa" stroke="#8f8f8f" shape-rendering="geometricPrecision"/><rect x="2" y="4" width="5" height="1" fill="#2c4f9e"/></svg>
<div class="a" style="left:33px;top:72px;width:5px;height:1px;background:repeating-linear-gradient(90deg,#8c8c8c 0 1px,transparent 1px 2px)"></div>
<svg style="left:39px;top:64px" width="16" height="16" viewBox="0 0 16 16" shape-rendering="crispEdges"><rect x="0" y="0" width="8" height="1" fill="#9a9a9a"/><rect x="0" y="1" width="8" height="1" fill="#c8c8c8"/><rect x="0" y="3" width="8" height="2" fill="#a2a2a2"/><rect x="0" y="6" width="8" height="2" fill="#a2a2a2"/><rect x="0" y="9" width="8" height="6" fill="#9a9a9a"/><rect x="5" y="10" width="1" height="1" fill="#eaffea"/><rect x="5" y="11" width="1" height="1" fill="#1fd12f"/><g shape-rendering="geometricPrecision"><g fill="#cf8f14"><rect x="7.4" y="0.7000000000000002" width="2.200" height="9" transform="rotate(0 8.5 5.2)"/><rect x="7.4" y="0.7000000000000002" width="2.200" height="9" transform="rotate(45 8.5 5.2)"/><rect x="7.4" y="0.7000000000000002" width="2.200" height="9" transform="rotate(90 8.5 5.2)"/><rect x="7.4" y="0.7000000000000002" width="2.200" height="9" transform="rotate(135 8.5 5.2)"/></g><circle cx="8.5" cy="5.2" r="3.400" fill="#cf8f14"/><circle cx="8.5" cy="5.2" r="2.500" fill="#f8d88e"/><circle cx="8.5" cy="5.2" r="1.250" fill="#fff" stroke="#c4840e" stroke-width="0.800"/></g><path d="M8 5.200L14 10.600L8 16.200z" fill="#25ad4e" shape-rendering="geometricPrecision"/></svg>
<div class="t" style="left:58px;top:64px;font-size:11px;letter-spacing:-0.23px;">Google BigQuery</div>
<div class="a" style="left:46px;top:78px;width:1px;height:6px;background:repeating-linear-gradient(#8c8c8c 0 1px,transparent 1px 2px)"></div>
<svg style="left:42px;top:84px" width="9" height="9" viewBox="0 0 9 9" shape-rendering="crispEdges"><rect x="0.500" y="0.500" width="8" height="8" rx="1.500" fill="#fafafa" stroke="#8f8f8f" shape-rendering="geometricPrecision"/><rect x="2" y="4" width="5" height="1" fill="#2c4f9e"/><rect x="4" y="2" width="1" height="5" fill="#2c4f9e"/></svg>
<div class="a" style="left:52px;top:88px;width:5px;height:1px;background:repeating-linear-gradient(90deg,#8c8c8c 0 1px,transparent 1px 2px)"></div>
<svg style="left:59px;top:80px" width="16" height="16" viewBox="0 0 16 16" shape-rendering="crispEdges"><path d="M0 0h6l2 2h6v10h-14z" fill="#6ca6cf" shape-rendering="geometricPrecision"/><rect x="2" y="4" width="10" height="7" fill="#fdfdfd"/><g shape-rendering="geometricPrecision"><path d="M4.500 5.500v6.500c0 1 1.500 1.800 3.500 1.800s3.500-0.800 3.500-1.800v-6.500z" fill="#a9a9a9"/><path d="M6 5.500v8h2.200v-8z" fill="#e6e6e6"/><ellipse cx="8" cy="5.500" rx="3.500" ry="1.500" fill="#dcdcdc" stroke="#9a9a9a" stroke-width="0.600"/><path d="M4.500 12c0 1 1.500 1.800 3.500 1.800s3.500-0.800 3.500-1.800" fill="none" stroke="#8a8a8a" stroke-width="0.700"/></g></svg>
<div class="t" style="left:77px;top:80px;font-size:11px;letter-spacing:0.03px;">Projects</div>
<svg style="left:23px;top:100px" width="9" height="9" viewBox="0 0 9 9" shape-rendering="crispEdges"><rect x="0.500" y="0.500" width="8" height="8" rx="1.500" fill="#fafafa" stroke="#8f8f8f" shape-rendering="geometricPrecision"/><rect x="2" y="4" width="5" height="1" fill="#2c4f9e"/><rect x="4" y="2" width="1" height="5" fill="#2c4f9e"/></svg>
<div class="a" style="left:33px;top:104px;width:5px;height:1px;background:repeating-linear-gradient(90deg,#8c8c8c 0 1px,transparent 1px 2px)"></div>
<svg style="left:39px;top:96px" width="16" height="16" viewBox="0 0 16 16" shape-rendering="crispEdges"><rect x="0" y="0" width="8" height="1" fill="#9a9a9a"/><rect x="0" y="1" width="8" height="1" fill="#c8c8c8"/><rect x="0" y="3" width="8" height="2" fill="#a2a2a2"/><rect x="0" y="6" width="8" height="2" fill="#a2a2a2"/><rect x="0" y="9" width="8" height="6" fill="#9a9a9a"/><rect x="5" y="10" width="1" height="1" fill="#eaffea"/><rect x="5" y="11" width="1" height="1" fill="#1fd12f"/><g shape-rendering="geometricPrecision"><g fill="#cf8f14"><rect x="7.4" y="0.7000000000000002" width="2.200" height="9" transform="rotate(0 8.5 5.2)"/><rect x="7.4" y="0.7000000000000002" width="2.200" height="9" transform="rotate(45 8.5 5.2)"/><rect x="7.4" y="0.7000000000000002" width="2.200" height="9" transform="rotate(90 8.5 5.2)"/><rect x="7.4" y="0.7000000000000002" width="2.200" height="9" transform="rotate(135 8.5 5.2)"/></g><circle cx="8.5" cy="5.2" r="3.400" fill="#cf8f14"/><circle cx="8.5" cy="5.2" r="2.500" fill="#f8d88e"/><circle cx="8.5" cy="5.2" r="1.250" fill="#fff" stroke="#c4840e" stroke-width="0.800"/></g><rect x="8" y="8" width="8" height="7" fill="#e9a53c"/><rect x="9" y="9" width="2" height="5" fill="#ffd84f"/><rect x="10" y="9" width="1" height="5" fill="#fff0a8"/><rect x="11" y="9" width="1" height="6" fill="#f6c85a"/><rect x="12" y="9" width="3" height="5" fill="#ffd84f"/><rect x="13" y="9" width="1" height="5" fill="#fff0a8"/></svg>
<div class="t" style="left:58px;top:96px;font-size:11px;">Greenplum v4.3.12</div>
<svg style="left:23px;top:116px" width="9" height="9" viewBox="0 0 9 9" shape-rendering="crispEdges"><rect x="0.500" y="0.500" width="8" height="8" rx="1.500" fill="#fafafa" stroke="#8f8f8f" shape-rendering="geometricPrecision"/><rect x="2" y="4" width="5" height="1" fill="#2c4f9e"/><rect x="4" y="2" width="1" height="5" fill="#2c4f9e"/></svg>
<div class="a" style="left:33px;top:120px;width:5px;height:1px;background:repeating-linear-gradient(90deg,#8c8c8c 0 1px,transparent 1px 2px)"></div>
<svg style="left:39px;top:112px" width="16" height="16" viewBox="0 0 16 16" shape-rendering="crispEdges"><rect x="0" y="0" width="8" height="1" fill="#9a9a9a"/><rect x="0" y="1" width="8" height="1" fill="#c8c8c8"/><rect x="0" y="3" width="8" height="2" fill="#a2a2a2"/><rect x="0" y="6" width="8" height="2" fill="#a2a2a2"/><rect x="0" y="9" width="8" height="6" fill="#9a9a9a"/><rect x="5" y="10" width="1" height="1" fill="#eaffea"/><rect x="5" y="11" width="1" height="1" fill="#1fd12f"/><g shape-rendering="geometricPrecision"><g fill="#cf8f14"><rect x="7.4" y="0.7000000000000002" width="2.200" height="9" transform="rotate(0 8.5 5.2)"/><rect x="7.4" y="0.7000000000000002" width="2.200" height="9" transform="rotate(45 8.5 5.2)"/><rect x="7.4" y="0.7000000000000002" width="2.200" height="9" transform="rotate(90 8.5 5.2)"/><rect x="7.4" y="0.7000000000000002" width="2.200" height="9" transform="rotate(135 8.5 5.2)"/></g><circle cx="8.5" cy="5.2" r="3.400" fill="#cf8f14"/><circle cx="8.5" cy="5.2" r="2.500" fill="#f8d88e"/><circle cx="8.5" cy="5.2" r="1.250" fill="#fff" stroke="#c4840e" stroke-width="0.800"/></g><rect x="8" y="8" width="8" height="7" fill="#e9a53c"/><rect x="9" y="9" width="2" height="5" fill="#ffd84f"/><rect x="10" y="9" width="1" height="5" fill="#fff0a8"/><rect x="11" y="9" width="1" height="6" fill="#f6c85a"/><rect x="12" y="9" width="3" height="5" fill="#ffd84f"/><rect x="13" y="9" width="1" height="5" fill="#fff0a8"/></svg>
<div class="t" style="left:58px;top:112px;font-size:11px;letter-spacing:-0.09px;">Greenplum v5.0</div>
<svg style="left:23px;top:132px" width="9" height="9" viewBox="0 0 9 9" shape-rendering="crispEdges"><rect x="0.500" y="0.500" width="8" height="8" rx="1.500" fill="#fafafa" stroke="#8f8f8f" shape-rendering="geometricPrecision"/><rect x="2" y="4" width="5" height="1" fill="#2c4f9e"/><rect x="4" y="2" width="1" height="5" fill="#2c4f9e"/></svg>
<div class="a" style="left:33px;top:136px;width:5px;height:1px;background:repeating-linear-gradient(90deg,#8c8c8c 0 1px,transparent 1px 2px)"></div>
<svg style="left:39px;top:128px" width="16" height="16" viewBox="0 0 16 16" shape-rendering="crispEdges"><rect x="0" y="0" width="8" height="1" fill="#9a9a9a"/><rect x="0" y="1" width="8" height="1" fill="#c8c8c8"/><rect x="0" y="3" width="8" height="2" fill="#a2a2a2"/><rect x="0" y="6" width="8" height="2" fill="#a2a2a2"/><rect x="0" y="9" width="8" height="6" fill="#9a9a9a"/><rect x="5" y="10" width="1" height="1" fill="#eaffea"/><rect x="5" y="11" width="1" height="1" fill="#1fd12f"/><g shape-rendering="geometricPrecision"><g fill="#cf8f14"><rect x="7.4" y="0.7000000000000002" width="2.200" height="9" transform="rotate(0 8.5 5.2)"/><rect x="7.4" y="0.7000000000000002" width="2.200" height="9" transform="rotate(45 8.5 5.2)"/><rect x="7.4" y="0.7000000000000002" width="2.200" height="9" transform="rotate(90 8.5 5.2)"/><rect x="7.4" y="0.7000000000000002" width="2.200" height="9" transform="rotate(135 8.5 5.2)"/></g><circle cx="8.5" cy="5.2" r="3.400" fill="#cf8f14"/><circle cx="8.5" cy="5.2" r="2.500" fill="#f8d88e"/><circle cx="8.5" cy="5.2" r="1.250" fill="#fff" stroke="#c4840e" stroke-width="0.800"/></g><rect x="8" y="8" width="8" height="7" fill="#e9a53c"/><rect x="9" y="9" width="2" height="5" fill="#ffd84f"/><rect x="10" y="9" width="1" height="5" fill="#fff0a8"/><rect x="11" y="9" width="1" height="6" fill="#f6c85a"/><rect x="12" y="9" width="3" height="5" fill="#ffd84f"/><rect x="13" y="9" width="1" height="5" fill="#fff0a8"/></svg>
<div class="t" style="left:58px;top:128px;font-size:11px;letter-spacing:-0.23px;">Hive - Cloudera HiveServer2</div>
<svg style="left:23px;top:148px" width="9" height="9" viewBox="0 0 9 9" shape-rendering="crispEdges"><rect x="0.500" y="0.500" width="8" height="8" rx="1.500" fill="#fafafa" stroke="#8f8f8f" shape-rendering="geometricPrecision"/><rect x="2" y="4" width="5" height="1" fill="#2c4f9e"/><rect x="4" y="2" width="1" height="5" fill="#2c4f9e"/></svg>
<div class="a" style="left:33px;top:152px;width:5px;height:1px;background:repeating-linear-gradient(90deg,#8c8c8c 0 1px,transparent 1px 2px)"></div>
<svg style="left:39px;top:144px" width="16" height="16" viewBox="0 0 16 16" shape-rendering="crispEdges"><rect x="0" y="0" width="8" height="1" fill="#9a9a9a"/><rect x="0" y="1" width="8" height="1" fill="#c8c8c8"/><rect x="0" y="3" width="8" height="2" fill="#a2a2a2"/><rect x="0" y="6" width="8" height="2" fill="#a2a2a2"/><rect x="0" y="9" width="8" height="6" fill="#9a9a9a"/><rect x="5" y="10" width="1" height="1" fill="#eaffea"/><rect x="5" y="11" width="1" height="1" fill="#1fd12f"/><g shape-rendering="geometricPrecision"><g fill="#cf8f14"><rect x="7.4" y="0.7000000000000002" width="2.200" height="9" transform="rotate(0 8.5 5.2)"/><rect x="7.4" y="0.7000000000000002" width="2.200" height="9" transform="rotate(45 8.5 5.2)"/><rect x="7.4" y="0.7000000000000002" width="2.200" height="9" transform="rotate(90 8.5 5.2)"/><rect x="7.4" y="0.7000000000000002" width="2.200" height="9" transform="rotate(135 8.5 5.2)"/></g><circle cx="8.5" cy="5.2" r="3.400" fill="#cf8f14"/><circle cx="8.5" cy="5.2" r="2.500" fill="#f8d88e"/><circle cx="8.5" cy="5.2" r="1.250" fill="#fff" stroke="#c4840e" stroke-width="0.800"/></g><rect x="8" y="8" width="8" height="7" fill="#e9a53c"/><rect x="9" y="9" width="2" height="5" fill="#ffd84f"/><rect x="10" y="9" width="1" height="5" fill="#fff0a8"/><rect x="11" y="9" width="1" height="6" fill="#f6c85a"/><rect x="12" y="9" width="3" height="5" fill="#ffd84f"/><rect x="13" y="9" width="1" height="5" fill="#fff0a8"/></svg>
<div class="t" style="left:58px;top:144px;font-size:11px;letter-spacing:-0.16px;">Hive - Cloudera Impala 2</div>
<svg style="left:23px;top:164px" width="9" height="9" viewBox="0 0 9 9" shape-rendering="crispEdges"><rect x="0.500" y="0.500" width="8" height="8" rx="1.500" fill="#fafafa" stroke="#8f8f8f" shape-rendering="geometricPrecision"/><rect x="2" y="4" width="5" height="1" fill="#2c4f9e"/><rect x="4" y="2" width="1" height="5" fill="#2c4f9e"/></svg>
<div class="a" style="left:33px;top:168px;width:5px;height:1px;background:repeating-linear-gradient(90deg,#8c8c8c 0 1px,transparent 1px 2px)"></div>
<svg style="left:39px;top:160px" width="16" height="16" viewBox="0 0 16 16" shape-rendering="crispEdges"><rect x="0" y="0" width="8" height="1" fill="#9a9a9a"/><rect x="0" y="1" width="8" height="1" fill="#c8c8c8"/><rect x="0" y="3" width="8" height="2" fill="#a2a2a2"/><rect x="0" y="6" width="8" height="2" fill="#a2a2a2"/><rect x="0" y="9" width="8" height="6" fill="#9a9a9a"/><rect x="5" y="10" width="1" height="1" fill="#eaffea"/><rect x="5" y="11" width="1" height="1" fill="#1fd12f"/><g shape-rendering="geometricPrecision"><g fill="#cf8f14"><rect x="7.4" y="0.7000000000000002" width="2.200" height="9" transform="rotate(0 8.5 5.2)"/><rect x="7.4" y="0.7000000000000002" width="2.200" height="9" transform="rotate(45 8.5 5.2)"/><rect x="7.4" y="0.7000000000000002" width="2.200" height="9" transform="rotate(90 8.5 5.2)"/><rect x="7.4" y="0.7000000000000002" width="2.200" height="9" transform="rotate(135 8.5 5.2)"/></g><circle cx="8.5" cy="5.2" r="3.400" fill="#cf8f14"/><circle cx="8.5" cy="5.2" r="2.500" fill="#f8d88e"/><circle cx="8.5" cy="5.2" r="1.250" fill="#fff" stroke="#c4840e" stroke-width="0.800"/></g><rect x="8" y="8" width="8" height="7" fill="#e9a53c"/><rect x="9" y="9" width="2" height="5" fill="#ffd84f"/><rect x="10" y="9" width="1" height="5" fill="#fff0a8"/><rect x="11" y="9" width="1" height="6" fill="#f6c85a"/><rect x="12" y="9" width="3" height="5" fill="#ffd84f"/><rect x="13" y="9" width="1" height="5" fill="#fff0a8"/></svg>
<div class="t" style="left:58px;top:160px;font-size:11px;letter-spacing:-0.08px;">Hive - HDP 2.6.4</div>
<svg style="left:23px;top:180px" width="9" height="9" viewBox="0 0 9 9" shape-rendering="crispEdges"><rect x="0.500" y="0.500" width="8" height="8" rx="1.500" fill="#fafafa" stroke="#8f8f8f" shape-rendering="geometricPrecision"/><rect x="2" y="4" width="5" height="1" fill="#2c4f9e"/><rect x="4" y="2" width="1" height="5" fill="#2c4f9e"/></svg>
<div class="a" style="left:33px;top:184px;width:5px;height:1px;background:repeating-linear-gradient(90deg,#8c8c8c 0 1px,transparent 1px 2px)"></div>
<svg style="left:39px;top:176px" width="16" height="16" viewBox="0 0 16 16" shape-rendering="crispEdges"><rect x="0" y="0" width="8" height="1" fill="#9a9a9a"/><rect x="0" y="1" width="8" height="1" fill="#c8c8c8"/><rect x="0" y="3" width="8" height="2" fill="#a2a2a2"/><rect x="0" y="6" width="8" height="2" fill="#a2a2a2"/><rect x="0" y="9" width="8" height="6" fill="#9a9a9a"/><rect x="5" y="10" width="1" height="1" fill="#eaffea"/><rect x="5" y="11" width="1" height="1" fill="#1fd12f"/><g shape-rendering="geometricPrecision"><g fill="#cf8f14"><rect x="7.4" y="0.7000000000000002" width="2.200" height="9" transform="rotate(0 8.5 5.2)"/><rect x="7.4" y="0.7000000000000002" width="2.200" height="9" transform="rotate(45 8.5 5.2)"/><rect x="7.4" y="0.7000000000000002" width="2.200" height="9" transform="rotate(90 8.5 5.2)"/><rect x="7.4" y="0.7000000000000002" width="2.200" height="9" transform="rotate(135 8.5 5.2)"/></g><circle cx="8.5" cy="5.2" r="3.400" fill="#cf8f14"/><circle cx="8.5" cy="5.2" r="2.500" fill="#f8d88e"/><circle cx="8.5" cy="5.2" r="1.250" fill="#fff" stroke="#c4840e" stroke-width="0.800"/></g><rect x="8" y="8" width="8" height="7" fill="#e9a53c"/><rect x="9" y="9" width="2" height="5" fill="#ffd84f"/><rect x="10" y="9" width="1" height="5" fill="#fff0a8"/><rect x="11" y="9" width="1" height="6" fill="#f6c85a"/><rect x="12" y="9" width="3" height="5" fill="#ffd84f"/><rect x="13" y="9" width="1" height="5" fill="#fff0a8"/></svg>
<div class="t" style="left:58px;top:176px;font-size:11px;letter-spacing:-0.15px;">Hive - HDP 3.0.1</div>
<div class="a" style="left:28px;top:200px;width:10px;height:1px;background:repeating-linear-gradient(90deg,#8c8c8c 0 1px,transparent 1px 2px)"></div>
<svg style="left:39px;top:192px" width="16" height="16" viewBox="0 0 16 16" shape-rendering="crispEdges"><rect x="0" y="0" width="8" height="1" fill="#9a9a9a"/><rect x="0" y="1" width="8" height="1" fill="#c8c8c8"/><rect x="0" y="3" width="8" height="2" fill="#a2a2a2"/><rect x="0" y="6" width="8" height="2" fill="#a2a2a2"/><rect x="0" y="9" width="8" height="6" fill="#9a9a9a"/><rect x="5" y="10" width="1" height="1" fill="#eaffea"/><rect x="5" y="11" width="1" height="1" fill="#1fd12f"/><g shape-rendering="geometricPrecision"><g fill="#cf8f14"><rect x="7.4" y="0.7000000000000002" width="2.200" height="9" transform="rotate(0 8.5 5.2)"/><rect x="7.4" y="0.7000000000000002" width="2.200" height="9" transform="rotate(45 8.5 5.2)"/><rect x="7.4" y="0.7000000000000002" width="2.200" height="9" transform="rotate(90 8.5 5.2)"/><rect x="7.4" y="0.7000000000000002" width="2.200" height="9" transform="rotate(135 8.5 5.2)"/></g><circle cx="8.5" cy="5.2" r="3.400" fill="#cf8f14"/><circle cx="8.5" cy="5.2" r="2.500" fill="#f8d88e"/><circle cx="8.5" cy="5.2" r="1.250" fill="#fff" stroke="#c4840e" stroke-width="0.800"/></g><rect x="9" y="9" width="7" height="7" fill="#d9453c"/><rect x="10" y="10" width="5" height="5" fill="#f4b0a8"/><rect x="11" y="11" width="3" height="3" fill="#e8746a"/></svg>
<div class="t" style="left:58px;top:192px;font-size:11px;letter-spacing:-0.03px;">Hive - Mapr 5.2.1 Hive</div>
<svg style="left:23px;top:212px" width="9" height="9" viewBox="0 0 9 9" shape-rendering="crispEdges"><rect x="0.500" y="0.500" width="8" height="8" rx="1.500" fill="#fafafa" stroke="#8f8f8f" shape-rendering="geometricPrecision"/><rect x="2" y="4" width="5" height="1" fill="#2c4f9e"/><rect x="4" y="2" width="1" height="5" fill="#2c4f9e"/></svg>
<div class="a" style="left:33px;top:216px;width:5px;height:1px;background:repeating-linear-gradient(90deg,#8c8c8c 0 1px,transparent 1px 2px)"></div>
<svg style="left:39px;top:208px" width="16" height="16" viewBox="0 0 16 16" shape-rendering="crispEdges"><rect x="0" y="0" width="8" height="1" fill="#9a9a9a"/><rect x="0" y="1" width="8" height="1" fill="#c8c8c8"/><rect x="0" y="3" width="8" height="2" fill="#a2a2a2"/><rect x="0" y="6" width="8" height="2" fill="#a2a2a2"/><rect x="0" y="9" width="8" height="6" fill="#9a9a9a"/><rect x="5" y="10" width="1" height="1" fill="#eaffea"/><rect x="5" y="11" width="1" height="1" fill="#1fd12f"/><g shape-rendering="geometricPrecision"><g fill="#cf8f14"><rect x="7.4" y="0.7000000000000002" width="2.200" height="9" transform="rotate(0 8.5 5.2)"/><rect x="7.4" y="0.7000000000000002" width="2.200" height="9" transform="rotate(45 8.5 5.2)"/><rect x="7.4" y="0.7000000000000002" width="2.200" height="9" transform="rotate(90 8.5 5.2)"/><rect x="7.4" y="0.7000000000000002" width="2.200" height="9" transform="rotate(135 8.5 5.2)"/></g><circle cx="8.5" cy="5.2" r="3.400" fill="#cf8f14"/><circle cx="8.5" cy="5.2" r="2.500" fill="#f8d88e"/><circle cx="8.5" cy="5.2" r="1.250" fill="#fff" stroke="#c4840e" stroke-width="0.800"/></g><rect x="8" y="8" width="8" height="7" fill="#e9a53c"/><rect x="9" y="9" width="2" height="5" fill="#ffd84f"/><rect x="10" y="9" width="1" height="5" fill="#fff0a8"/><rect x="11" y="9" width="1" height="6" fill="#f6c85a"/><rect x="12" y="9" width="3" height="5" fill="#ffd84f"/><rect x="13" y="9" width="1" height="5" fill="#fff0a8"/></svg>
<div class="t" style="left:58px;top:208px;font-size:11px;letter-spacing:0.03px;">Hive - Mapr 5.2.1 Impala</div>
<svg style="left:23px;top:228px" width="9" height="9" viewBox="0 0 9 9" shape-rendering="crispEdges"><rect x="0.500" y="0.500" width="8" height="8" rx="1.500" fill="#fafafa" stroke="#8f8f8f" shape-rendering="geometricPrecision"/><rect x="2" y="4" width="5" height="1" fill="#2c4f9e"/><rect x="4" y="2" width="1" height="5" fill="#2c4f9e"/></svg>
<div class="a" style="left:33px;top:232px;width:5px;height:1px;background:repeating-linear-gradient(90deg,#8c8c8c 0 1px,transparent 1px 2px)"></div>
<svg style="left:39px;top:224px" width="16" height="16" viewBox="0 0 16 16" shape-rendering="crispEdges"><rect x="0" y="0" width="8" height="1" fill="#9a9a9a"/><rect x="0" y="1" width="8" height="1" fill="#c8c8c8"/><rect x="0" y="3" width="8" height="2" fill="#a2a2a2"/><rect x="0" y="6" width="8" height="2" fill="#a2a2a2"/><rect x="0" y="9" width="8" height="6" fill="#9a9a9a"/><rect x="5" y="10" width="1" height="1" fill="#eaffea"/><rect x="5" y="11" width="1" height="1" fill="#1fd12f"/><g shape-rendering="geometricPrecision"><g fill="#cf8f14"><rect x="7.4" y="0.7000000000000002" width="2.200" height="9" transform="rotate(0 8.5 5.2)"/><rect x="7.4" y="0.7000000000000002" width="2.200" height="9" transform="rotate(45 8.5 5.2)"/><rect x="7.4" y="0.7000000000000002" width="2.200" height="9" transform="rotate(90 8.5 5.2)"/><rect x="7.4" y="0.7000000000000002" width="2.200" height="9" transform="rotate(135 8.5 5.2)"/></g><circle cx="8.5" cy="5.2" r="3.400" fill="#cf8f14"/><circle cx="8.5" cy="5.2" r="2.500" fill="#f8d88e"/><circle cx="8.5" cy="5.2" r="1.250" fill="#fff" stroke="#c4840e" stroke-width="0.800"/></g><rect x="8" y="8" width="8" height="7" fill="#e9a53c"/><rect x="9" y="9" width="2" height="5" fill="#ffd84f"/><rect x="10" y="9" width="1" height="5" fill="#fff0a8"/><rect x="11" y="9" width="1" height="6" fill="#f6c85a"/><rect x="12" y="9" width="3" height="5" fill="#ffd84f"/><rect x="13" y="9" width="1" height="5" fill="#fff0a8"/></svg>
<div class="t" style="left:58px;top:224px;font-size:11px;letter-spacing:0.24px;">Informix v11.70</div>
<svg style="left:23px;top:244px" width="9" height="9" viewBox="0 0 9 9" shape-rendering="crispEdges"><rect x="0.500" y="0.500" width="8" height="8" rx="1.500" fill="#fafafa" stroke="#8f8f8f" shape-rendering="geometricPrecision"/><rect x="2" y="4" width="5" height="1" fill="#2c4f9e"/><rect x="4" y="2" width="1" height="5" fill="#2c4f9e"/></svg>
<div class="a" style="left:33px;top:248px;width:5px;height:1px;background:repeating-linear-gradient(90deg,#8c8c8c 0 1px,transparent 1px 2px)"></div>
<svg style="left:39px;top:240px" width="16" height="16" viewBox="0 0 16 16" shape-rendering="crispEdges"><rect x="0" y="0" width="8" height="1" fill="#9a9a9a"/><rect x="0" y="1" width="8" height="1" fill="#c8c8c8"/><rect x="0" y="3" width="8" height="2" fill="#a2a2a2"/><rect x="0" y="6" width="8" height="2" fill="#a2a2a2"/><rect x="0" y="9" width="8" height="6" fill="#9a9a9a"/><rect x="5" y="10" width="1" height="1" fill="#eaffea"/><rect x="5" y="11" width="1" height="1" fill="#1fd12f"/><g shape-rendering="geometricPrecision"><g fill="#cf8f14"><rect x="7.4" y="0.7000000000000002" width="2.200" height="9" transform="rotate(0 8.5 5.2)"/><rect x="7.4" y="0.7000000000000002" width="2.200" height="9" transform="rotate(45 8.5 5.2)"/><rect x="7.4" y="0.7000000000000002" width="2.200" height="9" transform="rotate(90 8.5 5.2)"/><rect x="7.4" y="0.7000000000000002" width="2.200" height="9" transform="rotate(135 8.5 5.2)"/></g><circle cx="8.5" cy="5.2" r="3.400" fill="#cf8f14"/><circle cx="8.5" cy="5.2" r="2.500" fill="#f8d88e"/><circle cx="8.5" cy="5.2" r="1.250" fill="#fff" stroke="#c4840e" stroke-width="0.800"/></g><rect x="8" y="8" width="8" height="7" fill="#e9a53c"/><rect x="9" y="9" width="2" height="5" fill="#ffd84f"/><rect x="10" y="9" width="1" height="5" fill="#fff0a8"/><rect x="11" y="9" width="1" height="6" fill="#f6c85a"/><rect x="12" y="9" width="3" height="5" fill="#ffd84f"/><rect x="13" y="9" width="1" height="5" fill="#fff0a8"/></svg>
<div class="t" style="left:58px;top:240px;font-size:11px;letter-spacing:0.19px;">Informix v12.10</div>
<svg style="left:23px;top:260px" width="9" height="9" viewBox="0 0 9 9" shape-rendering="crispEdges"><rect x="0.500" y="0.500" width="8" height="8" rx="1.500" fill="#fafafa" stroke="#8f8f8f" shape-rendering="geometricPrecision"/><rect x="2" y="4" width="5" height="1" fill="#2c4f9e"/><rect x="4" y="2" width="1" height="5" fill="#2c4f9e"/></svg>
<div class="a" style="left:33px;top:264px;width:5px;height:1px;background:repeating-linear-gradient(90deg,#8c8c8c 0 1px,transparent 1px 2px)"></div>
<svg style="left:39px;top:256px" width="16" height="16" viewBox="0 0 16 16" shape-rendering="crispEdges"><rect x="0" y="0" width="8" height="1" fill="#9a9a9a"/><rect x="0" y="1" width="8" height="1" fill="#c8c8c8"/><rect x="0" y="3" width="8" height="2" fill="#a2a2a2"/><rect x="0" y="6" width="8" height="2" fill="#a2a2a2"/><rect x="0" y="9" width="8" height="6" fill="#9a9a9a"/><rect x="5" y="10" width="1" height="1" fill="#eaffea"/><rect x="5" y="11" width="1" height="1" fill="#1fd12f"/><g shape-rendering="geometricPrecision"><g fill="#cf8f14"><rect x="7.4" y="0.7000000000000002" width="2.200" height="9" transform="rotate(0 8.5 5.2)"/><rect x="7.4" y="0.7000000000000002" width="2.200" height="9" transform="rotate(45 8.5 5.2)"/><rect x="7.4" y="0.7000000000000002" width="2.200" height="9" transform="rotate(90 8.5 5.2)"/><rect x="7.4" y="0.7000000000000002" width="2.200" height="9" transform="rotate(135 8.5 5.2)"/></g><circle cx="8.5" cy="5.2" r="3.400" fill="#cf8f14"/><circle cx="8.5" cy="5.2" r="2.500" fill="#f8d88e"/><circle cx="8.5" cy="5.2" r="1.250" fill="#fff" stroke="#c4840e" stroke-width="0.800"/></g><rect x="8" y="8" width="8" height="7" fill="#e9a53c"/><rect x="9" y="9" width="2" height="5" fill="#ffd84f"/><rect x="10" y="9" width="1" height="5" fill="#fff0a8"/><rect x="11" y="9" width="1" height="6" fill="#f6c85a"/><rect x="12" y="9" width="3" height="5" fill="#ffd84f"/><rect x="13" y="9" width="1" height="5" fill="#fff0a8"/></svg>
<div class="t" style="left:58px;top:256px;font-size:11px;letter-spacing:0.11px;">Interbase 2017</div>
<svg style="left:23px;top:276px" width="9" height="9" viewBox="0 0 9 9" shape-rendering="crispEdges"><rect x="0.500" y="0.500" width="8" height="8" rx="1.500" fill="#fafafa" stroke="#8f8f8f" shape-rendering="geometricPrecision"/><rect x="2" y="4" width="5" height="1" fill="#2c4f9e"/><rect x="4" y="2" width="1" height="5" fill="#2c4f9e"/></svg>
<div class="a" style="left:33px;top:280px;width:5px;height:1px;background:repeating-linear-gradient(90deg,#8c8c8c 0 1px,transparent 1px 2px)"></div>
<svg style="left:39px;top:272px" width="16" height="16" viewBox="0 0 16 16" shape-rendering="crispEdges"><rect x="0" y="0" width="8" height="1" fill="#9a9a9a"/><rect x="0" y="1" width="8" height="1" fill="#c8c8c8"/><rect x="0" y="3" width="8" height="2" fill="#a2a2a2"/><rect x="0" y="6" width="8" height="2" fill="#a2a2a2"/><rect x="0" y="9" width="8" height="6" fill="#9a9a9a"/><rect x="5" y="10" width="1" height="1" fill="#eaffea"/><rect x="5" y="11" width="1" height="1" fill="#1fd12f"/><g shape-rendering="geometricPrecision"><g fill="#cf8f14"><rect x="7.4" y="0.7000000000000002" width="2.200" height="9" transform="rotate(0 8.5 5.2)"/><rect x="7.4" y="0.7000000000000002" width="2.200" height="9" transform="rotate(45 8.5 5.2)"/><rect x="7.4" y="0.7000000000000002" width="2.200" height="9" transform="rotate(90 8.5 5.2)"/><rect x="7.4" y="0.7000000000000002" width="2.200" height="9" transform="rotate(135 8.5 5.2)"/></g><circle cx="8.5" cy="5.2" r="3.400" fill="#cf8f14"/><circle cx="8.5" cy="5.2" r="2.500" fill="#f8d88e"/><circle cx="8.5" cy="5.2" r="1.250" fill="#fff" stroke="#c4840e" stroke-width="0.800"/></g><rect x="8" y="8" width="8" height="7" fill="#e9a53c"/><rect x="9" y="9" width="2" height="5" fill="#ffd84f"/><rect x="10" y="9" width="1" height="5" fill="#fff0a8"/><rect x="11" y="9" width="1" height="6" fill="#f6c85a"/><rect x="12" y="9" width="3" height="5" fill="#ffd84f"/><rect x="13" y="9" width="1" height="5" fill="#fff0a8"/></svg>
<div class="t" style="left:58px;top:272px;font-size:11px;letter-spacing:-0.20px;">Interbase 2017 EMPLOYEE</div>
<svg style="left:23px;top:292px" width="9" height="9" viewBox="0 0 9 9" shape-rendering="crispEdges"><rect x="0.500" y="0.500" width="8" height="8" rx="1.500" fill="#fafafa" stroke="#8f8f8f" shape-rendering="geometricPrecision"/><rect x="2" y="4" width="5" height="1" fill="#2c4f9e"/><rect x="4" y="2" width="1" height="5" fill="#2c4f9e"/></svg>
<div class="a" style="left:33px;top:296px;width:5px;height:1px;background:repeating-linear-gradient(90deg,#8c8c8c 0 1px,transparent 1px 2px)"></div>
<svg style="left:39px;top:288px" width="16" height="16" viewBox="0 0 16 16" shape-rendering="crispEdges"><rect x="0" y="0" width="8" height="1" fill="#9a9a9a"/><rect x="0" y="1" width="8" height="1" fill="#c8c8c8"/><rect x="0" y="3" width="8" height="2" fill="#a2a2a2"/><rect x="0" y="6" width="8" height="2" fill="#a2a2a2"/><rect x="0" y="9" width="8" height="6" fill="#9a9a9a"/><rect x="5" y="10" width="1" height="1" fill="#eaffea"/><rect x="5" y="11" width="1" height="1" fill="#1fd12f"/><g shape-rendering="geometricPrecision"><g fill="#cf8f14"><rect x="7.4" y="0.7000000000000002" width="2.200" height="9" transform="rotate(0 8.5 5.2)"/><rect x="7.4" y="0.7000000000000002" width="2.200" height="9" transform="rotate(45 8.5 5.2)"/><rect x="7.4" y="0.7000000000000002" width="2.200" height="9" transform="rotate(90 8.5 5.2)"/><rect x="7.4" y="0.7000000000000002" width="2.200" height="9" transform="rotate(135 8.5 5.2)"/></g><circle cx="8.5" cy="5.2" r="3.400" fill="#cf8f14"/><circle cx="8.5" cy="5.2" r="2.500" fill="#f8d88e"/><circle cx="8.5" cy="5.2" r="1.250" fill="#fff" stroke="#c4840e" stroke-width="0.800"/></g><rect x="8" y="8" width="8" height="7" fill="#e9a53c"/><rect x="9" y="9" width="2" height="5" fill="#ffd84f"/><rect x="10" y="9" width="1" height="5" fill="#fff0a8"/><rect x="11" y="9" width="1" height="6" fill="#f6c85a"/><rect x="12" y="9" width="3" height="5" fill="#ffd84f"/><rect x="13" y="9" width="1" height="5" fill="#fff0a8"/></svg>
<div class="t" style="left:58px;top:288px;font-size:11px;letter-spacing:-0.14px;">MariaDB v10.2</div>
<svg style="left:23px;top:308px" width="9" height="9" viewBox="0 0 9 9" shape-rendering="crispEdges"><rect x="0.500" y="0.500" width="8" height="8" rx="1.500" fill="#fafafa" stroke="#8f8f8f" shape-rendering="geometricPrecision"/><rect x="2" y="4" width="5" height="1" fill="#2c4f9e"/><rect x="4" y="2" width="1" height="5" fill="#2c4f9e"/></svg>
<div class="a" style="left:33px;top:312px;width:5px;height:1px;background:repeating-linear-gradient(90deg,#8c8c8c 0 1px,transparent 1px 2px)"></div>
<svg style="left:39px;top:304px" width="16" height="16" viewBox="0 0 16 16" shape-rendering="crispEdges"><rect x="0" y="0" width="8" height="1" fill="#9a9a9a"/><rect x="0" y="1" width="8" height="1" fill="#c8c8c8"/><rect x="0" y="3" width="8" height="2" fill="#a2a2a2"/><rect x="0" y="6" width="8" height="2" fill="#a2a2a2"/><rect x="0" y="9" width="8" height="6" fill="#9a9a9a"/><rect x="5" y="10" width="1" height="1" fill="#eaffea"/><rect x="5" y="11" width="1" height="1" fill="#1fd12f"/><g shape-rendering="geometricPrecision"><g fill="#cf8f14"><rect x="7.4" y="0.7000000000000002" width="2.200" height="9" transform="rotate(0 8.5 5.2)"/><rect x="7.4" y="0.7000000000000002" width="2.200" height="9" transform="rotate(45 8.5 5.2)"/><rect x="7.4" y="0.7000000000000002" width="2.200" height="9" transform="rotate(90 8.5 5.2)"/><rect x="7.4" y="0.7000000000000002" width="2.200" height="9" transform="rotate(135 8.5 5.2)"/></g><circle cx="8.5" cy="5.2" r="3.400" fill="#cf8f14"/><circle cx="8.5" cy="5.2" r="2.500" fill="#f8d88e"/><circle cx="8.5" cy="5.2" r="1.250" fill="#fff" stroke="#c4840e" stroke-width="0.800"/></g><rect x="8" y="8" width="8" height="7" fill="#e9a53c"/><rect x="9" y="9" width="2" height="5" fill="#ffd84f"/><rect x="10" y="9" width="1" height="5" fill="#fff0a8"/><rect x="11" y="9" width="1" height="6" fill="#f6c85a"/><rect x="12" y="9" width="3" height="5" fill="#ffd84f"/><rect x="13" y="9" width="1" height="5" fill="#fff0a8"/></svg>
<div class="t" style="left:58px;top:304px;font-size:11px;letter-spacing:-0.20px;">Microsoft SQL Azure (Free)</div>
<svg style="left:23px;top:324px" width="9" height="9" viewBox="0 0 9 9" shape-rendering="crispEdges"><rect x="0.500" y="0.500" width="8" height="8" rx="1.500" fill="#fafafa" stroke="#8f8f8f" shape-rendering="geometricPrecision"/><rect x="2" y="4" width="5" height="1" fill="#2c4f9e"/><rect x="4" y="2" width="1" height="5" fill="#2c4f9e"/></svg>
<div class="a" style="left:33px;top:328px;width:5px;height:1px;background:repeating-linear-gradient(90deg,#8c8c8c 0 1px,transparent 1px 2px)"></div>
<svg style="left:39px;top:320px" width="16" height="16" viewBox="0 0 16 16" shape-rendering="crispEdges"><rect x="0" y="0" width="8" height="1" fill="#9a9a9a"/><rect x="0" y="1" width="8" height="1" fill="#c8c8c8"/><rect x="0" y="3" width="8" height="2" fill="#a2a2a2"/><rect x="0" y="6" width="8" height="2" fill="#a2a2a2"/><rect x="0" y="9" width="8" height="6" fill="#9a9a9a"/><rect x="5" y="10" width="1" height="1" fill="#eaffea"/><rect x="5" y="11" width="1" height="1" fill="#1fd12f"/><g shape-rendering="geometricPrecision"><g fill="#cf8f14"><rect x="7.4" y="0.7000000000000002" width="2.200" height="9" transform="rotate(0 8.5 5.2)"/><rect x="7.4" y="0.7000000000000002" width="2.200" height="9" transform="rotate(45 8.5 5.2)"/><rect x="7.4" y="0.7000000000000002" width="2.200" height="9" transform="rotate(90 8.5 5.2)"/><rect x="7.4" y="0.7000000000000002" width="2.200" height="9" transform="rotate(135 8.5 5.2)"/></g><circle cx="8.5" cy="5.2" r="3.400" fill="#cf8f14"/><circle cx="8.5" cy="5.2" r="2.500" fill="#f8d88e"/><circle cx="8.5" cy="5.2" r="1.250" fill="#fff" stroke="#c4840e" stroke-width="0.800"/></g><rect x="8" y="8" width="8" height="7" fill="#e9a53c"/><rect x="9" y="9" width="2" height="5" fill="#ffd84f"/><rect x="10" y="9" width="1" height="5" fill="#fff0a8"/><rect x="11" y="9" width="1" height="6" fill="#f6c85a"/><rect x="12" y="9" width="3" height="5" fill="#ffd84f"/><rect x="13" y="9" width="1" height="5" fill="#fff0a8"/></svg>
<div class="t" style="left:58px;top:320px;font-size:11px;letter-spacing:-0.14px;">MongoDB v3.2.1</div>
<svg style="left:23px;top:340px" width="9" height="9" viewBox="0 0 9 9" shape-rendering="crispEdges"><rect x="0.500" y="0.500" width="8" height="8" rx="1.500" fill="#fafafa" stroke="#8f8f8f" shape-rendering="geometricPrecision"/><rect x="2" y="4" width="5" height="1" fill="#2c4f9e"/><rect x="4" y="2" width="1" height="5" fill="#2c4f9e"/></svg>
<div class="a" style="left:33px;top:344px;width:5px;height:1px;background:repeating-linear-gradient(90deg,#8c8c8c 0 1px,transparent 1px 2px)"></div>
<svg style="left:39px;top:336px" width="16" height="16" viewBox="0 0 16 16" shape-rendering="crispEdges"><rect x="0" y="0" width="8" height="1" fill="#9a9a9a"/><rect x="0" y="1" width="8" height="1" fill="#c8c8c8"/><rect x="0" y="3" width="8" height="2" fill="#a2a2a2"/><rect x="0" y="6" width="8" height="2" fill="#a2a2a2"/><rect x="0" y="9" width="8" height="6" fill="#9a9a9a"/><rect x="5" y="10" width="1" height="1" fill="#eaffea"/><rect x="5" y="11" width="1" height="1" fill="#1fd12f"/><g shape-rendering="geometricPrecision"><g fill="#cf8f14"><rect x="7.4" y="0.7000000000000002" width="2.200" height="9" transform="rotate(0 8.5 5.2)"/><rect x="7.4" y="0.7000000000000002" width="2.200" height="9" transform="rotate(45 8.5 5.2)"/><rect x="7.4" y="0.7000000000000002" width="2.200" height="9" transform="rotate(90 8.5 5.2)"/><rect x="7.4" y="0.7000000000000002" width="2.200" height="9" transform="rotate(135 8.5 5.2)"/></g><circle cx="8.5" cy="5.2" r="3.400" fill="#cf8f14"/><circle cx="8.5" cy="5.2" r="2.500" fill="#f8d88e"/><circle cx="8.5" cy="5.2" r="1.250" fill="#fff" stroke="#c4840e" stroke-width="0.800"/></g><rect x="8" y="8" width="8" height="7" fill="#e9a53c"/><rect x="9" y="9" width="2" height="5" fill="#ffd84f"/><rect x="10" y="9" width="1" height="5" fill="#fff0a8"/><rect x="11" y="9" width="1" height="6" fill="#f6c85a"/><rect x="12" y="9" width="3" height="5" fill="#ffd84f"/><rect x="13" y="9" width="1" height="5" fill="#fff0a8"/></svg>
<div class="t" style="left:58px;top:336px;font-size:11px;letter-spacing:-0.14px;">MongoDB v3.4.1</div>
<svg style="left:23px;top:356px" width="9" height="9" viewBox="0 0 9 9" shape-rendering="crispEdges"><rect x="0.500" y="0.500" width="8" height="8" rx="1.500" fill="#fafafa" stroke="#8f8f8f" shape-rendering="geometricPrecision"/><rect x="2" y="4" width="5" height="1" fill="#2c4f9e"/><rect x="4" y="2" width="1" height="5" fill="#2c4f9e"/></svg>
<div class="a" style="left:33px;top:360px;width:5px;height:1px;background:repeating-linear-gradient(90deg,#8c8c8c 0 1px,transparent 1px 2px)"></div>
<svg style="left:39px;top:352px" width="16" height="16" viewBox="0 0 16 16" shape-rendering="crispEdges"><rect x="0" y="0" width="8" height="1" fill="#9a9a9a"/><rect x="0" y="1" width="8" height="1" fill="#c8c8c8"/><rect x="0" y="3" width="8" height="2" fill="#a2a2a2"/><rect x="0" y="6" width="8" height="2" fill="#a2a2a2"/><rect x="0" y="9" width="8" height="6" fill="#9a9a9a"/><rect x="5" y="10" width="1" height="1" fill="#eaffea"/><rect x="5" y="11" width="1" height="1" fill="#1fd12f"/><g shape-rendering="geometricPrecision"><g fill="#cf8f14"><rect x="7.4" y="0.7000000000000002" width="2.200" height="9" transform="rotate(0 8.5 5.2)"/><rect x="7.4" y="0.7000000000000002" width="2.200" height="9" transform="rotate(45 8.5 5.2)"/><rect x="7.4" y="0.7000000000000002" width="2.200" height="9" transform="rotate(90 8.5 5.2)"/><rect x="7.4" y="0.7000000000000002" width="2.200" height="9" transform="rotate(135 8.5 5.2)"/></g><circle cx="8.5" cy="5.2" r="3.400" fill="#cf8f14"/><circle cx="8.5" cy="5.2" r="2.500" fill="#f8d88e"/><circle cx="8.5" cy="5.2" r="1.250" fill="#fff" stroke="#c4840e" stroke-width="0.800"/></g><rect x="8" y="8" width="8" height="7" fill="#e9a53c"/><rect x="9" y="9" width="2" height="5" fill="#ffd84f"/><rect x="10" y="9" width="1" height="5" fill="#fff0a8"/><rect x="11" y="9" width="1" height="6" fill="#f6c85a"/><rect x="12" y="9" width="3" height="5" fill="#ffd84f"/><rect x="13" y="9" width="1" height="5" fill="#fff0a8"/></svg>
<div class="t" style="left:58px;top:352px;font-size:11px;letter-spacing:-0.15px;">MongoDB v3.6</div>
<svg style="left:23px;top:372px" width="9" height="9" viewBox="0 0 9 9" shape-rendering="crispEdges"><rect x="0.500" y="0.500" width="8" height="8" rx="1.500" fill="#fafafa" stroke="#8f8f8f" shape-rendering="geometricPrecision"/><rect x="2" y="4" width="5" height="1" fill="#2c4f9e"/><rect x="4" y="2" width="1" height="5" fill="#2c4f9e"/></svg>
<div class="a" style="left:33px;top:376px;width:5px;height:1px;background:repeating-linear-gradient(90deg,#8c8c8c 0 1px,transparent 1px 2px)"></div>
<svg style="left:39px;top:368px" width="16" height="16" viewBox="0 0 16 16" shape-rendering="crispEdges"><rect x="0" y="0" width="8" height="1" fill="#9a9a9a"/><rect x="0" y="1" width="8" height="1" fill="#c8c8c8"/><rect x="0" y="3" width="8" height="2" fill="#a2a2a2"/><rect x="0" y="6" width="8" height="2" fill="#a2a2a2"/><rect x="0" y="9" width="8" height="6" fill="#9a9a9a"/><rect x="5" y="10" width="1" height="1" fill="#eaffea"/><rect x="5" y="11" width="1" height="1" fill="#1fd12f"/><g shape-rendering="geometricPrecision"><g fill="#cf8f14"><rect x="7.4" y="0.7000000000000002" width="2.200" height="9" transform="rotate(0 8.5 5.2)"/><rect x="7.4" y="0.7000000000000002" width="2.200" height="9" transform="rotate(45 8.5 5.2)"/><rect x="7.4" y="0.7000000000000002" width="2.200" height="9" transform="rotate(90 8.5 5.2)"/><rect x="7.4" y="0.7000000000000002" width="2.200" height="9" transform="rotate(135 8.5 5.2)"/></g><circle cx="8.5" cy="5.2" r="3.400" fill="#cf8f14"/><circle cx="8.5" cy="5.2" r="2.500" fill="#f8d88e"/><circle cx="8.5" cy="5.2" r="1.250" fill="#fff" stroke="#c4840e" stroke-width="0.800"/></g><rect x="8" y="8" width="8" height="7" fill="#e9a53c"/><rect x="9" y="9" width="2" height="5" fill="#ffd84f"/><rect x="10" y="9" width="1" height="5" fill="#fff0a8"/><rect x="11" y="9" width="1" height="6" fill="#f6c85a"/><rect x="12" y="9" width="3" height="5" fill="#ffd84f"/><rect x="13" y="9" width="1" height="5" fill="#fff0a8"/></svg>
<div class="t" style="left:58px;top:368px;font-size:11px;letter-spacing:-0.15px;">MongoDB v4.0</div>
<svg style="left:23px;top:388px" width="9" height="9" viewBox="0 0 9 9" shape-rendering="crispEdges"><rect x="0.500" y="0.500" width="8" height="8" rx="1.500" fill="#fafafa" stroke="#8f8f8f" shape-rendering="geometricPrecision"/><rect x="2" y="4" width="5" height="1" fill="#2c4f9e"/><rect x="4" y="2" width="1" height="5" fill="#2c4f9e"/></svg>
<div class="a" style="left:33px;top:392px;width:5px;height:1px;background:repeating-linear-gradient(90deg,#8c8c8c 0 1px,transparent 1px 2px)"></div>
<svg style="left:39px;top:384px" width="16" height="16" viewBox="0 0 16 16" shape-rendering="crispEdges"><rect x="0" y="0" width="8" height="1" fill="#9a9a9a"/><rect x="0" y="1" width="8" height="1" fill="#c8c8c8"/><rect x="0" y="3" width="8" height="2" fill="#a2a2a2"/><rect x="0" y="6" width="8" height="2" fill="#a2a2a2"/><rect x="0" y="9" width="8" height="6" fill="#9a9a9a"/><rect x="5" y="10" width="1" height="1" fill="#eaffea"/><rect x="5" y="11" width="1" height="1" fill="#1fd12f"/><g shape-rendering="geometricPrecision"><g fill="#cf8f14"><rect x="7.4" y="0.7000000000000002" width="2.200" height="9" transform="rotate(0 8.5 5.2)"/><rect x="7.4" y="0.7000000000000002" width="2.200" height="9" transform="rotate(45 8.5 5.2)"/><rect x="7.4" y="0.7000000000000002" width="2.200" height="9" transform="rotate(90 8.5 5.2)"/><rect x="7.4" y="0.7000000000000002" width="2.200" height="9" transform="rotate(135 8.5 5.2)"/></g><circle cx="8.5" cy="5.2" r="3.400" fill="#cf8f14"/><circle cx="8.5" cy="5.2" r="2.500" fill="#f8d88e"/><circle cx="8.5" cy="5.2" r="1.250" fill="#fff" stroke="#c4840e" stroke-width="0.800"/></g><rect x="8" y="8" width="8" height="7" fill="#e9a53c"/><rect x="9" y="9" width="2" height="5" fill="#ffd84f"/><rect x="10" y="9" width="1" height="5" fill="#fff0a8"/><rect x="11" y="9" width="1" height="6" fill="#f6c85a"/><rect x="12" y="9" width="3" height="5" fill="#ffd84f"/><rect x="13" y="9" width="1" height="5" fill="#fff0a8"/></svg>
<div class="t" style="left:58px;top:384px;font-size:11px;letter-spacing:-0.11px;">MySQL v5.7</div>
<svg style="left:23px;top:404px" width="9" height="9" viewBox="0 0 9 9" shape-rendering="crispEdges"><rect x="0.500" y="0.500" width="8" height="8" rx="1.500" fill="#fafafa" stroke="#8f8f8f" shape-rendering="geometricPrecision"/><rect x="2" y="4" width="5" height="1" fill="#2c4f9e"/><rect x="4" y="2" width="1" height="5" fill="#2c4f9e"/></svg>
<div class="a" style="left:33px;top:408px;width:5px;height:1px;background:repeating-linear-gradient(90deg,#8c8c8c 0 1px,transparent 1px 2px)"></div>
<svg style="left:39px;top:400px" width="16" height="16" viewBox="0 0 16 16" shape-rendering="crispEdges"><rect x="0" y="0" width="8" height="1" fill="#9a9a9a"/><rect x="0" y="1" width="8" height="1" fill="#c8c8c8"/><rect x="0" y="3" width="8" height="2" fill="#a2a2a2"/><rect x="0" y="6" width="8" height="2" fill="#a2a2a2"/><rect x="0" y="9" width="8" height="6" fill="#9a9a9a"/><rect x="5" y="10" width="1" height="1" fill="#eaffea"/><rect x="5" y="11" width="1" height="1" fill="#1fd12f"/><g shape-rendering="geometricPrecision"><g fill="#cf8f14"><rect x="7.4" y="0.7000000000000002" width="2.200" height="9" transform="rotate(0 8.5 5.2)"/><rect x="7.4" y="0.7000000000000002" width="2.200" height="9" transform="rotate(45 8.5 5.2)"/><rect x="7.4" y="0.7000000000000002" width="2.200" height="9" transform="rotate(90 8.5 5.2)"/><rect x="7.4" y="0.7000000000000002" width="2.200" height="9" transform="rotate(135 8.5 5.2)"/></g><circle cx="8.5" cy="5.2" r="3.400" fill="#cf8f14"/><circle cx="8.5" cy="5.2" r="2.500" fill="#f8d88e"/><circle cx="8.5" cy="5.2" r="1.250" fill="#fff" stroke="#c4840e" stroke-width="0.800"/></g><rect x="8" y="8" width="8" height="7" fill="#e9a53c"/><rect x="9" y="9" width="2" height="5" fill="#ffd84f"/><rect x="10" y="9" width="1" height="5" fill="#fff0a8"/><rect x="11" y="9" width="1" height="6" fill="#f6c85a"/><rect x="12" y="9" width="3" height="5" fill="#ffd84f"/><rect x="13" y="9" width="1" height="5" fill="#fff0a8"/></svg>
<div class="t" style="left:58px;top:400px;font-size:11px;letter-spacing:-0.11px;">MySQL v8.0</div>
<svg style="left:23px;top:420px" width="9" height="9" viewBox="0 0 9 9" shape-rendering="crispEdges"><rect x="0.500" y="0.500" width="8" height="8" rx="1.500" fill="#fafafa" stroke="#8f8f8f" shape-rendering="geometricPrecision"/><rect x="2" y="4" width="5" height="1" fill="#2c4f9e"/><rect x="4" y="2" width="1" height="5" fill="#2c4f9e"/></svg>
<div class="a" style="left:33px;top:424px;width:5px;height:1px;background:repeating-linear-gradient(90deg,#8c8c8c 0 1px,transparent 1px 2px)"></div>
<svg style="left:39px;top:416px" width="16" height="16" viewBox="0 0 16 16" shape-rendering="crispEdges"><rect x="0" y="0" width="8" height="1" fill="#9a9a9a"/><rect x="0" y="1" width="8" height="1" fill="#c8c8c8"/><rect x="0" y="3" width="8" height="2" fill="#a2a2a2"/><rect x="0" y="6" width="8" height="2" fill="#a2a2a2"/><rect x="0" y="9" width="8" height="6" fill="#9a9a9a"/><rect x="5" y="10" width="1" height="1" fill="#eaffea"/><rect x="5" y="11" width="1" height="1" fill="#1fd12f"/><g shape-rendering="geometricPrecision"><g fill="#cf8f14"><rect x="7.4" y="0.7000000000000002" width="2.200" height="9" transform="rotate(0 8.5 5.2)"/><rect x="7.4" y="0.7000000000000002" width="2.200" height="9" transform="rotate(45 8.5 5.2)"/><rect x="7.4" y="0.7000000000000002" width="2.200" height="9" transform="rotate(90 8.5 5.2)"/><rect x="7.4" y="0.7000000000000002" width="2.200" height="9" transform="rotate(135 8.5 5.2)"/></g><circle cx="8.5" cy="5.2" r="3.400" fill="#cf8f14"/><circle cx="8.5" cy="5.2" r="2.500" fill="#f8d88e"/><circle cx="8.5" cy="5.2" r="1.250" fill="#fff" stroke="#c4840e" stroke-width="0.800"/></g><rect x="8" y="8" width="8" height="7" fill="#e9a53c"/><rect x="9" y="9" width="2" height="5" fill="#ffd84f"/><rect x="10" y="9" width="1" height="5" fill="#fff0a8"/><rect x="11" y="9" width="1" height="6" fill="#f6c85a"/><rect x="12" y="9" width="3" height="5" fill="#ffd84f"/><rect x="13" y="9" width="1" height="5" fill="#fff0a8"/></svg>
<div class="t" style="left:58px;top:416px;font-size:11px;letter-spacing:0.03px;">Netezza 7.2</div>
<svg style="left:23px;top:436px" width="9" height="9" viewBox="0 0 9 9" shape-rendering="crispEdges"><rect x="0.500" y="0.500" width="8" height="8" rx="1.500" fill="#fafafa" stroke="#8f8f8f" shape-rendering="geometricPrecision"/><rect x="2" y="4" width="5" height="1" fill="#2c4f9e"/><rect x="4" y="2" width="1" height="5" fill="#2c4f9e"/></svg>
<div class="a" style="left:33px;top:440px;width:5px;height:1px;background:repeating-linear-gradient(90deg,#8c8c8c 0 1px,transparent 1px 2px)"></div>
<svg style="left:39px;top:432px" width="16" height="16" viewBox="0 0 16 16" shape-rendering="crispEdges"><rect x="0" y="0" width="8" height="1" fill="#9a9a9a"/><rect x="0" y="1" width="8" height="1" fill="#c8c8c8"/><rect x="0" y="3" width="8" height="2" fill="#a2a2a2"/><rect x="0" y="6" width="8" height="2" fill="#a2a2a2"/><rect x="0" y="9" width="8" height="6" fill="#9a9a9a"/><rect x="5" y="10" width="1" height="1" fill="#eaffea"/><rect x="5" y="11" width="1" height="1" fill="#1fd12f"/><g shape-rendering="geometricPrecision"><g fill="#cf8f14"><rect x="7.4" y="0.7000000000000002" width="2.200" height="9" transform="rotate(0 8.5 5.2)"/><rect x="7.4" y="0.7000000000000002" width="2.200" height="9" transform="rotate(45 8.5 5.2)"/><rect x="7.4" y="0.7000000000000002" width="2.200" height="9" transform="rotate(90 8.5 5.2)"/><rect x="7.4" y="0.7000000000000002" width="2.200" height="9" transform="rotate(135 8.5 5.2)"/></g><circle cx="8.5" cy="5.2" r="3.400" fill="#cf8f14"/><circle cx="8.5" cy="5.2" r="2.500" fill="#f8d88e"/><circle cx="8.5" cy="5.2" r="1.250" fill="#fff" stroke="#c4840e" stroke-width="0.800"/></g><rect x="8" y="8" width="8" height="7" fill="#e9a53c"/><rect x="9" y="9" width="2" height="5" fill="#ffd84f"/><rect x="10" y="9" width="1" height="5" fill="#fff0a8"/><rect x="11" y="9" width="1" height="6" fill="#f6c85a"/><rect x="12" y="9" width="3" height="5" fill="#ffd84f"/><rect x="13" y="9" width="1" height="5" fill="#fff0a8"/></svg>
<div class="t" style="left:58px;top:432px;font-size:11px;letter-spacing:-0.04px;">Oracle v11g R2</div>
<svg style="left:23px;top:452px" width="9" height="9" viewBox="0 0 9 9" shape-rendering="crispEdges"><rect x="0.500" y="0.500" width="8" height="8" rx="1.500" fill="#fafafa" stroke="#8f8f8f" shape-rendering="geometricPrecision"/><rect x="2" y="4" width="5" height="1" fill="#2c4f9e"/><rect x="4" y="2" width="1" height="5" fill="#2c4f9e"/></svg>
<div class="a" style="left:33px;top:456px;width:5px;height:1px;background:repeating-linear-gradient(90deg,#8c8c8c 0 1px,transparent 1px 2px)"></div>
<svg style="left:39px;top:448px" width="16" height="16" viewBox="0 0 16 16" shape-rendering="crispEdges"><rect x="0" y="0" width="8" height="1" fill="#9a9a9a"/><rect x="0" y="1" width="8" height="1" fill="#c8c8c8"/><rect x="0" y="3" width="8" height="2" fill="#a2a2a2"/><rect x="0" y="6" width="8" height="2" fill="#a2a2a2"/><rect x="0" y="9" width="8" height="6" fill="#9a9a9a"/><rect x="5" y="10" width="1" height="1" fill="#eaffea"/><rect x="5" y="11" width="1" height="1" fill="#1fd12f"/><g shape-rendering="geometricPrecision"><g fill="#cf8f14"><rect x="7.4" y="0.7000000000000002" width="2.200" height="9" transform="rotate(0 8.5 5.2)"/><rect x="7.4" y="0.7000000000000002" width="2.200" height="9" transform="rotate(45 8.5 5.2)"/><rect x="7.4" y="0.7000000000000002" width="2.200" height="9" transform="rotate(90 8.5 5.2)"/><rect x="7.4" y="0.7000000000000002" width="2.200" height="9" transform="rotate(135 8.5 5.2)"/></g><circle cx="8.5" cy="5.2" r="3.400" fill="#cf8f14"/><circle cx="8.5" cy="5.2" r="2.500" fill="#f8d88e"/><circle cx="8.5" cy="5.2" r="1.250" fill="#fff" stroke="#c4840e" stroke-width="0.800"/></g><rect x="8" y="8" width="8" height="7" fill="#e9a53c"/><rect x="9" y="9" width="2" height="5" fill="#ffd84f"/><rect x="10" y="9" width="1" height="5" fill="#fff0a8"/><rect x="11" y="9" width="1" height="6" fill="#f6c85a"/><rect x="12" y="9" width="3" height="5" fill="#ffd84f"/><rect x="13" y="9" width="1" height="5" fill="#fff0a8"/></svg>
<div class="t" style="left:58px;top:448px;font-size:11px;letter-spacing:0.20px;">Oracle v12.1.0.2.0</div>
<svg style="left:23px;top:468px" width="9" height="9" viewBox="0 0 9 9" shape-rendering="crispEdges"><rect x="0.500" y="0.500" width="8" height="8" rx="1.500" fill="#fafafa" stroke="#8f8f8f" shape-rendering="geometricPrecision"/><rect x="2" y="4" width="5" height="1" fill="#2c4f9e"/><rect x="4" y="2" width="1" height="5" fill="#2c4f9e"/></svg>
<div class="a" style="left:33px;top:472px;width:5px;height:1px;background:repeating-linear-gradient(90deg,#8c8c8c 0 1px,transparent 1px 2px)"></div>
<svg style="left:39px;top:464px" width="16" height="16" viewBox="0 0 16 16" shape-rendering="crispEdges"><rect x="0" y="0" width="8" height="1" fill="#9a9a9a"/><rect x="0" y="1" width="8" height="1" fill="#c8c8c8"/><rect x="0" y="3" width="8" height="2" fill="#a2a2a2"/><rect x="0" y="6" width="8" height="2" fill="#a2a2a2"/><rect x="0" y="9" width="8" height="6" fill="#9a9a9a"/><rect x="5" y="10" width="1" height="1" fill="#eaffea"/><rect x="5" y="11" width="1" height="1" fill="#1fd12f"/><g shape-rendering="geometricPrecision"><g fill="#cf8f14"><rect x="7.4" y="0.7000000000000002" width="2.200" height="9" transform="rotate(0 8.5 5.2)"/><rect x="7.4" y="0.7000000000000002" width="2.200" height="9" transform="rotate(45 8.5 5.2)"/><rect x="7.4" y="0.7000000000000002" width="2.200" height="9" transform="rotate(90 8.5 5.2)"/><rect x="7.4" y="0.7000000000000002" width="2.200" height="9" transform="rotate(135 8.5 5.2)"/></g><circle cx="8.5" cy="5.2" r="3.400" fill="#cf8f14"/><circle cx="8.5" cy="5.2" r="2.500" fill="#f8d88e"/><circle cx="8.5" cy="5.2" r="1.250" fill="#fff" stroke="#c4840e" stroke-width="0.800"/></g><rect x="8" y="8" width="8" height="7" fill="#e9a53c"/><rect x="9" y="9" width="2" height="5" fill="#ffd84f"/><rect x="10" y="9" width="1" height="5" fill="#fff0a8"/><rect x="11" y="9" width="1" height="6" fill="#f6c85a"/><rect x="12" y="9" width="3" height="5" fill="#ffd84f"/><rect x="13" y="9" width="1" height="5" fill="#fff0a8"/></svg>
<div class="t" style="left:58px;top:464px;font-size:11px;letter-spacing:-0.17px;">Paraccel</div>
<svg style="left:23px;top:484px" width="9" height="9" viewBox="0 0 9 9" shape-rendering="crispEdges"><rect x="0.500" y="0.500" width="8" height="8" rx="1.500" fill="#fafafa" stroke="#8f8f8f" shape-rendering="geometricPrecision"/><rect x="2" y="4" width="5" height="1" fill="#2c4f9e"/><rect x="4" y="2" width="1" height="5" fill="#2c4f9e"/></svg>
<div class="a" style="left:33px;top:488px;width:5px;height:1px;background:repeating-linear-gradient(90deg,#8c8c8c 0 1px,transparent 1px 2px)"></div>
<svg style="left:39px;top:480px" width="16" height="16" viewBox="0 0 16 16" shape-rendering="crispEdges"><rect x="0" y="0" width="8" height="1" fill="#9a9a9a"/><rect x="0" y="1" width="8" height="1" fill="#c8c8c8"/><rect x="0" y="3" width="8" height="2" fill="#a2a2a2"/><rect x="0" y="6" width="8" height="2" fill="#a2a2a2"/><rect x="0" y="9" width="8" height="6" fill="#9a9a9a"/><rect x="5" y="10" width="1" height="1" fill="#eaffea"/><rect x="5" y="11" width="1" height="1" fill="#1fd12f"/><g shape-rendering="geometricPrecision"><g fill="#cf8f14"><rect x="7.4" y="0.7000000000000002" width="2.200" height="9" transform="rotate(0 8.5 5.2)"/><rect x="7.4" y="0.7000000000000002" width="2.200" height="9" transform="rotate(45 8.5 5.2)"/><rect x="7.4" y="0.7000000000000002" width="2.200" height="9" transform="rotate(90 8.5 5.2)"/><rect x="7.4" y="0.7000000000000002" width="2.200" height="9" transform="rotate(135 8.5 5.2)"/></g><circle cx="8.5" cy="5.2" r="3.400" fill="#cf8f14"/><circle cx="8.5" cy="5.2" r="2.500" fill="#f8d88e"/><circle cx="8.5" cy="5.2" r="1.250" fill="#fff" stroke="#c4840e" stroke-width="0.800"/></g><rect x="8" y="8" width="8" height="7" fill="#e9a53c"/><rect x="9" y="9" width="2" height="5" fill="#ffd84f"/><rect x="10" y="9" width="1" height="5" fill="#fff0a8"/><rect x="11" y="9" width="1" height="6" fill="#f6c85a"/><rect x="12" y="9" width="3" height="5" fill="#ffd84f"/><rect x="13" y="9" width="1" height="5" fill="#fff0a8"/></svg>
<div class="t" style="left:58px;top:480px;font-size:11px;letter-spacing:-0.10px;">Paraccel 5.0</div>
<svg style="left:23px;top:500px" width="9" height="9" viewBox="0 0 9 9" shape-rendering="crispEdges"><rect x="0.500" y="0.500" width="8" height="8" rx="1.500" fill="#fafafa" stroke="#8f8f8f" shape-rendering="geometricPrecision"/><rect x="2" y="4" width="5" height="1" fill="#2c4f9e"/><rect x="4" y="2" width="1" height="5" fill="#2c4f9e"/></svg>
<div class="a" style="left:33px;top:504px;width:5px;height:1px;background:repeating-linear-gradient(90deg,#8c8c8c 0 1px,transparent 1px 2px)"></div>
<svg style="left:39px;top:496px" width="16" height="16" viewBox="0 0 16 16" shape-rendering="crispEdges"><rect x="0" y="0" width="8" height="1" fill="#9a9a9a"/><rect x="0" y="1" width="8" height="1" fill="#c8c8c8"/><rect x="0" y="3" width="8" height="2" fill="#a2a2a2"/><rect x="0" y="6" width="8" height="2" fill="#a2a2a2"/><rect x="0" y="9" width="8" height="6" fill="#9a9a9a"/><rect x="5" y="10" width="1" height="1" fill="#eaffea"/><rect x="5" y="11" width="1" height="1" fill="#1fd12f"/><g shape-rendering="geometricPrecision"><g fill="#cf8f14"><rect x="7.4" y="0.7000000000000002" width="2.200" height="9" transform="rotate(0 8.5 5.2)"/><rect x="7.4" y="0.7000000000000002" width="2.200" height="9" transform="rotate(45 8.5 5.2)"/><rect x="7.4" y="0.7000000000000002" width="2.200" height="9" transform="rotate(90 8.5 5.2)"/><rect x="7.4" y="0.7000000000000002" width="2.200" height="9" transform="rotate(135 8.5 5.2)"/></g><circle cx="8.5" cy="5.2" r="3.400" fill="#cf8f14"/><circle cx="8.5" cy="5.2" r="2.500" fill="#f8d88e"/><circle cx="8.5" cy="5.2" r="1.250" fill="#fff" stroke="#c4840e" stroke-width="0.800"/></g><rect x="8" y="8" width="8" height="7" fill="#e9a53c"/><rect x="9" y="9" width="2" height="5" fill="#ffd84f"/><rect x="10" y="9" width="1" height="5" fill="#fff0a8"/><rect x="11" y="9" width="1" height="6" fill="#f6c85a"/><rect x="12" y="9" width="3" height="5" fill="#ffd84f"/><rect x="13" y="9" width="1" height="5" fill="#fff0a8"/></svg>
<div class="t" style="left:58px;top:496px;font-size:11px;letter-spacing:-0.09px;">PostgreSQL v10.0</div>
<svg style="left:23px;top:516px" width="9" height="9" viewBox="0 0 9 9" shape-rendering="crispEdges"><rect x="0.500" y="0.500" width="8" height="8" rx="1.500" fill="#fafafa" stroke="#8f8f8f" shape-rendering="geometricPrecision"/><rect x="2" y="4" width="5" height="1" fill="#2c4f9e"/><rect x="4" y="2" width="1" height="5" fill="#2c4f9e"/></svg>
<div class="a" style="left:33px;top:520px;width:5px;height:1px;background:repeating-linear-gradient(90deg,#8c8c8c 0 1px,transparent 1px 2px)"></div>
<svg style="left:39px;top:512px" width="16" height="16" viewBox="0 0 16 16" shape-rendering="crispEdges"><rect x="0" y="0" width="8" height="1" fill="#9a9a9a"/><rect x="0" y="1" width="8" height="1" fill="#c8c8c8"/><rect x="0" y="3" width="8" height="2" fill="#a2a2a2"/><rect x="0" y="6" width="8" height="2" fill="#a2a2a2"/><rect x="0" y="9" width="8" height="6" fill="#9a9a9a"/><rect x="5" y="10" width="1" height="1" fill="#eaffea"/><rect x="5" y="11" width="1" height="1" fill="#1fd12f"/><g shape-rendering="geometricPrecision"><g fill="#cf8f14"><rect x="7.4" y="0.7000000000000002" width="2.200" height="9" transform="rotate(0 8.5 5.2)"/><rect x="7.4" y="0.7000000000000002" width="2.200" height="9" transform="rotate(45 8.5 5.2)"/><rect x="7.4" y="0.7000000000000002" width="2.200" height="9" transform="rotate(90 8.5 5.2)"/><rect x="7.4" y="0.7000000000000002" width="2.200" height="9" transform="rotate(135 8.5 5.2)"/></g><circle cx="8.5" cy="5.2" r="3.400" fill="#cf8f14"/><circle cx="8.5" cy="5.2" r="2.500" fill="#f8d88e"/><circle cx="8.5" cy="5.2" r="1.250" fill="#fff" stroke="#c4840e" stroke-width="0.800"/></g><rect x="8" y="8" width="8" height="7" fill="#e9a53c"/><rect x="9" y="9" width="2" height="5" fill="#ffd84f"/><rect x="10" y="9" width="1" height="5" fill="#fff0a8"/><rect x="11" y="9" width="1" height="6" fill="#f6c85a"/><rect x="12" y="9" width="3" height="5" fill="#ffd84f"/><rect x="13" y="9" width="1" height="5" fill="#fff0a8"/></svg>
<div class="t" style="left:58px;top:512px;font-size:11px;letter-spacing:-0.04px;">PostgreSQL v11.0</div>
<svg style="left:23px;top:532px" width="9" height="9" viewBox="0 0 9 9" shape-rendering="crispEdges"><rect x="0.500" y="0.500" width="8" height="8" rx="1.500" fill="#fafafa" stroke="#8f8f8f" shape-rendering="geometricPrecision"/><rect x="2" y="4" width="5" height="1" fill="#2c4f9e"/><rect x="4" y="2" width="1" height="5" fill="#2c4f9e"/></svg>
<div class="a" style="left:33px;top:536px;width:5px;height:1px;background:repeating-linear-gradient(90deg,#8c8c8c 0 1px,transparent 1px 2px)"></div>
<svg style="left:39px;top:528px" width="16" height="16" viewBox="0 0 16 16" shape-rendering="crispEdges"><rect x="0" y="0" width="8" height="1" fill="#9a9a9a"/><rect x="0" y="1" width="8" height="1" fill="#c8c8c8"/><rect x="0" y="3" width="8" height="2" fill="#a2a2a2"/><rect x="0" y="6" width="8" height="2" fill="#a2a2a2"/><rect x="0" y="9" width="8" height="6" fill="#9a9a9a"/><rect x="5" y="10" width="1" height="1" fill="#eaffea"/><rect x="5" y="11" width="1" height="1" fill="#1fd12f"/><g shape-rendering="geometricPrecision"><g fill="#cf8f14"><rect x="7.4" y="0.7000000000000002" width="2.200" height="9" transform="rotate(0 8.5 5.2)"/><rect x="7.4" y="0.7000000000000002" width="2.200" height="9" transform="rotate(45 8.5 5.2)"/><rect x="7.4" y="0.7000000000000002" width="2.200" height="9" transform="rotate(90 8.5 5.2)"/><rect x="7.4" y="0.7000000000000002" width="2.200" height="9" transform="rotate(135 8.5 5.2)"/></g><circle cx="8.5" cy="5.2" r="3.400" fill="#cf8f14"/><circle cx="8.5" cy="5.2" r="2.500" fill="#f8d88e"/><circle cx="8.5" cy="5.2" r="1.250" fill="#fff" stroke="#c4840e" stroke-width="0.800"/></g><rect x="8" y="8" width="8" height="7" fill="#e9a53c"/><rect x="9" y="9" width="2" height="5" fill="#ffd84f"/><rect x="10" y="9" width="1" height="5" fill="#fff0a8"/><rect x="11" y="9" width="1" height="6" fill="#f6c85a"/><rect x="12" y="9" width="3" height="5" fill="#ffd84f"/><rect x="13" y="9" width="1" height="5" fill="#fff0a8"/></svg>
<div class="t" style="left:58px;top:528px;font-size:11px;letter-spacing:-0.09px;">PostgreSQL v9.6</div>
<svg style="left:23px;top:548px" width="9" height="9" viewBox="0 0 9 9" shape-rendering="crispEdges"><rect x="0.500" y="0.500" width="8" height="8" rx="1.500" fill="#fafafa" stroke="#8f8f8f" shape-rendering="geometricPrecision"/><rect x="2" y="4" width="5" height="1" fill="#2c4f9e"/><rect x="4" y="2" width="1" height="5" fill="#2c4f9e"/></svg>
<div class="a" style="left:33px;top:552px;width:5px;height:1px;background:repeating-linear-gradient(90deg,#8c8c8c 0 1px,transparent 1px 2px)"></div>
<svg style="left:39px;top:544px" width="16" height="16" viewBox="0 0 16 16" shape-rendering="crispEdges"><rect x="0" y="0" width="8" height="1" fill="#9a9a9a"/><rect x="0" y="1" width="8" height="1" fill="#c8c8c8"/><rect x="0" y="3" width="8" height="2" fill="#a2a2a2"/><rect x="0" y="6" width="8" height="2" fill="#a2a2a2"/><rect x="0" y="9" width="8" height="6" fill="#9a9a9a"/><rect x="5" y="10" width="1" height="1" fill="#eaffea"/><rect x="5" y="11" width="1" height="1" fill="#1fd12f"/><g shape-rendering="geometricPrecision"><g fill="#cf8f14"><rect x="7.4" y="0.7000000000000002" width="2.200" height="9" transform="rotate(0 8.5 5.2)"/><rect x="7.4" y="0.7000000000000002" width="2.200" height="9" transform="rotate(45 8.5 5.2)"/><rect x="7.4" y="0.7000000000000002" width="2.200" height="9" transform="rotate(90 8.5 5.2)"/><rect x="7.4" y="0.7000000000000002" width="2.200" height="9" transform="rotate(135 8.5 5.2)"/></g><circle cx="8.5" cy="5.2" r="3.400" fill="#cf8f14"/><circle cx="8.5" cy="5.2" r="2.500" fill="#f8d88e"/><circle cx="8.5" cy="5.2" r="1.250" fill="#fff" stroke="#c4840e" stroke-width="0.800"/></g><rect x="8" y="8" width="8" height="7" fill="#e9a53c"/><rect x="9" y="9" width="2" height="5" fill="#ffd84f"/><rect x="10" y="9" width="1" height="5" fill="#fff0a8"/><rect x="11" y="9" width="1" height="6" fill="#f6c85a"/><rect x="12" y="9" width="3" height="5" fill="#ffd84f"/><rect x="13" y="9" width="1" height="5" fill="#fff0a8"/></svg>
<div class="t" style="left:58px;top:544px;font-size:11px;letter-spacing:-0.51px;">RDS MariaDB</div>
<svg style="left:23px;top:564px" width="9" height="9" viewBox="0 0 9 9" shape-rendering="crispEdges"><rect x="0.500" y="0.500" width="8" height="8" rx="1.500" fill="#fafafa" stroke="#8f8f8f" shape-rendering="geometricPrecision"/><rect x="2" y="4" width="5" height="1" fill="#2c4f9e"/><rect x="4" y="2" width="1" height="5" fill="#2c4f9e"/></svg>
<div class="a" style="left:33px;top:568px;width:5px;height:1px;background:repeating-linear-gradient(90deg,#8c8c8c 0 1px,transparent 1px 2px)"></div>
<svg style="left:39px;top:560px" width="16" height="16" viewBox="0 0 16 16" shape-rendering="crispEdges"><rect x="0" y="0" width="8" height="1" fill="#9a9a9a"/><rect x="0" y="1" width="8" height="1" fill="#c8c8c8"/><rect x="0" y="3" width="8" height="2" fill="#a2a2a2"/><rect x="0" y="6" width="8" height="2" fill="#a2a2a2"/><rect x="0" y="9" width="8" height="6" fill="#9a9a9a"/><rect x="5" y="10" width="1" height="1" fill="#eaffea"/><rect x="5" y="11" width="1" height="1" fill="#1fd12f"/><g shape-rendering="geometricPrecision"><g fill="#cf8f14"><rect x="7.4" y="0.7000000000000002" width="2.200" height="9" transform="rotate(0 8.5 5.2)"/><rect x="7.4" y="0.7000000000000002" width="2.200" height="9" transform="rotate(45 8.5 5.2)"/><rect x="7.4" y="0.7000000000000002" width="2.200" height="9" transform="rotate(90 8.5 5.2)"/><rect x="7.4" y="0.7000000000000002" width="2.200" height="9" transform="rotate(135 8.5 5.2)"/></g><circle cx="8.5" cy="5.2" r="3.400" fill="#cf8f14"/><circle cx="8.5" cy="5.2" r="2.500" fill="#f8d88e"/><circle cx="8.5" cy="5.2" r="1.250" fill="#fff" stroke="#c4840e" stroke-width="0.800"/></g><rect x="8" y="8" width="8" height="7" fill="#e9a53c"/><rect x="9" y="9" width="2" height="5" fill="#ffd84f"/><rect x="10" y="9" width="1" height="5" fill="#fff0a8"/><rect x="11" y="9" width="1" height="6" fill="#f6c85a"/><rect x="12" y="9" width="3" height="5" fill="#ffd84f"/><rect x="13" y="9" width="1" height="5" fill="#fff0a8"/></svg>
<div class="t" style="left:58px;top:560px;font-size:11px;letter-spacing:-0.66px;">RDS MySQL</div>
<svg style="left:23px;top:580px" width="9" height="9" viewBox="0 0 9 9" shape-rendering="crispEdges"><rect x="0.500" y="0.500" width="8" height="8" rx="1.500" fill="#fafafa" stroke="#8f8f8f" shape-rendering="geometricPrecision"/><rect x="2" y="4" width="5" height="1" fill="#2c4f9e"/><rect x="4" y="2" width="1" height="5" fill="#2c4f9e"/></svg>
<div class="a" style="left:33px;top:584px;width:5px;height:1px;background:repeating-linear-gradient(90deg,#8c8c8c 0 1px,transparent 1px 2px)"></div>
<svg style="left:39px;top:576px" width="16" height="16" viewBox="0 0 16 16" shape-rendering="crispEdges"><rect x="0" y="0" width="8" height="1" fill="#9a9a9a"/><rect x="0" y="1" width="8" height="1" fill="#c8c8c8"/><rect x="0" y="3" width="8" height="2" fill="#a2a2a2"/><rect x="0" y="6" width="8" height="2" fill="#a2a2a2"/><rect x="0" y="9" width="8" height="6" fill="#9a9a9a"/><rect x="5" y="10" width="1" height="1" fill="#eaffea"/><rect x="5" y="11" width="1" height="1" fill="#1fd12f"/><g shape-rendering="geometricPrecision"><g fill="#cf8f14"><rect x="7.4" y="0.7000000000000002" width="2.200" height="9" transform="rotate(0 8.5 5.2)"/><rect x="7.4" y="0.7000000000000002" width="2.200" height="9" transform="rotate(45 8.5 5.2)"/><rect x="7.4" y="0.7000000000000002" width="2.200" height="9" transform="rotate(90 8.5 5.2)"/><rect x="7.4" y="0.7000000000000002" width="2.200" height="9" transform="rotate(135 8.5 5.2)"/></g><circle cx="8.5" cy="5.2" r="3.400" fill="#cf8f14"/><circle cx="8.5" cy="5.2" r="2.500" fill="#f8d88e"/><circle cx="8.5" cy="5.2" r="1.250" fill="#fff" stroke="#c4840e" stroke-width="0.800"/></g><rect x="8" y="8" width="8" height="7" fill="#e9a53c"/><rect x="9" y="9" width="2" height="5" fill="#ffd84f"/><rect x="10" y="9" width="1" height="5" fill="#fff0a8"/><rect x="11" y="9" width="1" height="6" fill="#f6c85a"/><rect x="12" y="9" width="3" height="5" fill="#ffd84f"/><rect x="13" y="9" width="1" height="5" fill="#fff0a8"/></svg>
<div class="t" style="left:58px;top:576px;font-size:11px;letter-spacing:-0.37px;">RDS Oracle</div>
</div>
<div class="a" style="left:188px;top:102px;width:16px;height:584px;background:#f0f0f0;"></div>
<div class="a" style="left:188px;top:146px;width:15px;height:329px;background:#cdcdcd;"></div>
<svg style="left:192px;top:107px" width="7" height="7" viewBox="0 0 7 7"><path d="M0.300 6L3.500 2.300L6.700 6" fill="none" stroke="#505050" stroke-width="2" shape-rendering="geometricPrecision"/></svg>
<svg style="left:192px;top:675px" width="7" height="7" viewBox="0 0 7 7"><path d="M0.300 1L3.500 4.700L6.700 1" fill="none" stroke="#505050" stroke-width="2" shape-rendering="geometricPrecision"/></svg>
<div class="a" style="left:22px;top:686px;width:182px;height:17px;background:#f0f0f0;"></div>
<div class="a" style="left:39px;top:687px;width:95px;height:16px;background:#cdcdcd;"></div>
<svg style="left:27px;top:691px" width="7" height="7" viewBox="0 0 7 7"><path d="M5 0.500L1.500 3.500L5 6.500" fill="none" stroke="#505050" stroke-width="2" shape-rendering="geometricPrecision"/></svg>
<svg style="left:175px;top:691px" width="7" height="7" viewBox="0 0 7 7"><path d="M2 0.500L5.500 3.500L2 6.500" fill="none" stroke="#505050" stroke-width="2" shape-rendering="geometricPrecision"/></svg>
<div class="a" style="left:204px;top:82px;width:1px;height:621px;background:#a0a0a0;"></div>
<div class="a" style="left:187px;top:103px;width:1px;height:583px;background:#fff;"></div>
<div class="a" style="left:22px;top:102px;width:182px;height:1px;background:#adadad;"></div>
<div class="a" style="left:205px;top:82px;width:3px;height:621px;background:#f2f2f2;"></div>
<div class="a" style="left:208px;top:82px;width:898px;height:22px;background:#fff;"></div>
<div class="a" style="left:1106px;top:82px;width:3px;height:621px;background:#f0f0f0;"></div>
<div class="a" style="left:208px;top:104px;width:898px;height:596px;background:#f0f0f0;border:1px solid #a0a0a0;"></div>
<div class="a" style="left:216px;top:84px;width:229px;height:21px;background:linear-gradient(#e9e9e9,#e1e1e1);border:1px solid #a0a0a0;border-bottom:none;"></div>
<svg style="left:221px;top:86px" width="16" height="16" viewBox="0 0 16 16" shape-rendering="crispEdges"><rect x="0" y="0" width="12" height="3" fill="#3f72b8"/><rect x="0" y="3" width="2" height="7" fill="#9a9a9a"/><rect x="1" y="3" width="2" height="5" fill="#fff"/><rect x="3" y="2" width="13" height="3" fill="#4ea6dc"/><rect x="4" y="3" width="11" height="1" fill="#8fd0f4"/><rect x="3" y="5" width="13" height="9" fill="#b8b8b8"/><rect x="4" y="5" width="3" height="2" fill="#fff"/><rect x="4" y="8" width="3" height="2" fill="#fff"/><rect x="4" y="11" width="3" height="2" fill="#fff"/><rect x="8" y="5" width="3" height="2" fill="#fff"/><rect x="8" y="8" width="3" height="2" fill="#fff"/><rect x="8" y="11" width="3" height="2" fill="#fff"/><rect x="12" y="5" width="3" height="2" fill="#fff"/><rect x="12" y="8" width="3" height="2" fill="#fff"/><rect x="12" y="11" width="3" height="2" fill="#fff"/><g shape-rendering="geometricPrecision"><g fill="#cf8f14"><rect x="3.4" y="6.0" width="2.200" height="9" transform="rotate(0 4.5 10.5)"/><rect x="3.4" y="6.0" width="2.200" height="9" transform="rotate(45 4.5 10.5)"/><rect x="3.4" y="6.0" width="2.200" height="9" transform="rotate(90 4.5 10.5)"/><rect x="3.4" y="6.0" width="2.200" height="9" transform="rotate(135 4.5 10.5)"/></g><circle cx="4.5" cy="10.5" r="3.400" fill="#cf8f14"/><circle cx="4.5" cy="10.5" r="2.500" fill="#f8d88e"/><circle cx="4.5" cy="10.5" r="1.250" fill="#fff" stroke="#c4840e" stroke-width="0.800"/></g><g shape-rendering="geometricPrecision"><circle cx="10.5" cy="10.5" r="2.8" fill="#b9d9ea" stroke="#828282" stroke-width="1.3"/><path d="M12.459999999999999 12.459999999999999l2.4 2.4" stroke="#828282" stroke-width="1.6" stroke-linecap="round"/></g></svg>
<div class="t" style="left:240px;top:86px;font-size:11px;font-weight:bold;letter-spacing:0.47px;">@Google BigQuery [Untitled 4]*</div>
<svg style="left:431px;top:91px" width="8" height="8" viewBox="0 0 8 8"><path d="M0.900 0.700L7.100 6.900M7.100 0.700L0.900 6.900" stroke="#111" stroke-width="1.600" shape-rendering="geometricPrecision"/></svg>
<svg style="left:1058px;top:89px" width="5" height="9" viewBox="0 0 5 9" shape-rendering="crispEdges"><path d="M4.500 0.800V8.200L0.800 4.500Z" fill="none" stroke="#111" stroke-width="1" shape-rendering="geometricPrecision"/><rect x="4" y="0" width="1" height="9" fill="#111"/></svg>
<svg style="left:1075px;top:89px" width="5" height="9" viewBox="0 0 5 9" shape-rendering="crispEdges"><path d="M0.500 0.800V8.200L4.200 4.500Z" fill="none" stroke="#111" stroke-width="1" shape-rendering="geometricPrecision"/><rect x="0" y="0" width="1" height="9" fill="#111"/></svg>
<svg style="left:1089px;top:89px" width="8" height="9" viewBox="0 0 8 9" shape-rendering="crispEdges"><rect x="0" y="0" width="8" height="9" fill="#111"/><rect x="1" y="1" width="6" height="7" fill="#fff"/><rect x="2" y="2" width="4" height="1" fill="#111"/><rect x="2" y="4" width="4" height="1" fill="#111"/><rect x="2" y="6" width="4" height="1" fill="#111"/></svg>
<div class="a" style="left:210px;top:106px;width:893px;height:70px;background:#f0f0f0;border:1px solid #a0a0a0;box-shadow:inset 1px 1px 0 #fff;"></div>
<svg style="left:216px;top:112px" width="12" height="14" viewBox="0 0 12 14" shape-rendering="crispEdges"><path d="M1.500 0.500h6l3.500 3.500v9.500h-9.500z" fill="#fff" stroke="#9c9c9c" shape-rendering="geometricPrecision"/><path d="M7.500 0.500v3.500h3.500" fill="#e4e4e4" stroke="#9c9c9c" shape-rendering="geometricPrecision"/><rect x="4" y="7" width="5" height="1" fill="#2c9e3c"/><rect x="6" y="5" width="1" height="5" fill="#2c9e3c"/></svg>
<svg style="left:238px;top:113px" width="14" height="13" viewBox="0 0 14 13" shape-rendering="crispEdges"><path d="M0.500 0.500h4.500l2 2h6.500v10h-13z" fill="#fdf2c6" stroke="#c9985c" shape-rendering="geometricPrecision"/><path d="M6.500 9.500L10.500 5.500M7.500 5.500h3v3" fill="none" stroke="#3a8ecf" stroke-width="1.100" shape-rendering="geometricPrecision"/></svg>
<svg style="left:261px;top:113px" width="12" height="12" viewBox="0 0 12 12" shape-rendering="crispEdges"><rect x="0" y="0" width="12" height="7" fill="#8e8e8e"/><rect x="2" y="2" width="8" height="4" fill="#fff"/><rect x="0" y="6" width="12" height="6" fill="#3a8ecf"/><rect x="3" y="8" width="6" height="3" fill="#fff"/><rect x="5" y="9" width="2" height="2" fill="#3a8ecf"/></svg>
<svg style="left:381px;top:111px" width="16" height="16" viewBox="0 0 16 16" shape-rendering="crispEdges"><g shape-rendering="geometricPrecision" fill="none"><path d="M4 1L8.500 9M12.500 1L8 9" stroke="#7c7c7c" stroke-width="1.300"/><circle cx="5.500" cy="12" r="2.300" stroke="#3a8ecf" stroke-width="1.200"/><circle cx="11" cy="12" r="2.300" stroke="#3a8ecf" stroke-width="1.200"/></g><rect x="7" y="7" width="3" height="2" fill="#8a8a8a"/></svg>
<svg style="left:401px;top:111px" width="16" height="16" viewBox="0 0 16 16" shape-rendering="crispEdges"><path d="M0.5 0.5h5l3 3v7h-8z" fill="#fdfdfd" stroke="#a2a2a2" shape-rendering="geometricPrecision"/><rect x="2" y="3" width="3" height="1" fill="#3f86b8"/><rect x="2" y="5" width="5" height="1" fill="#3f86b8"/><rect x="2" y="7" width="5" height="1" fill="#3f86b8"/><path d="M5.5 3.5h7l3 3v9h-10z" fill="#fdfdfd" stroke="#a2a2a2" shape-rendering="geometricPrecision"/><rect x="7" y="6" width="5" height="1" fill="#3f86b8"/><rect x="7" y="8" width="7" height="1" fill="#3f86b8"/><rect x="7" y="10" width="7" height="1" fill="#3f86b8"/><rect x="7" y="12" width="7" height="1" fill="#3f86b8"/></svg>
<svg style="left:424px;top:111px" width="16" height="16" viewBox="0 0 16 16" shape-rendering="crispEdges"><rect x="0" y="3" width="13" height="12" fill="#c4925e"/><rect x="3" y="2" width="7" height="2" fill="#ececec"/><rect x="3" y="2" width="7" height="1" fill="#8a8a8a"/><rect x="4" y="0" width="5" height="1" fill="#8a8a8a"/><rect x="4" y="0" width="1" height="2" fill="#8a8a8a"/><rect x="8" y="0" width="1" height="2" fill="#8a8a8a"/><rect x="5" y="1" width="3" height="1" fill="#f4f4f4"/><path d="M5.5 7.5h6l3 3v5h-9z" fill="#fdfdfd" stroke="#a2a2a2" shape-rendering="geometricPrecision"/><rect x="8" y="11" width="2" height="1" fill="#3f86b8"/><rect x="8" y="13" width="4" height="1" fill="#3f86b8"/></svg>
<svg style="left:446px;top:112px" width="16" height="14" viewBox="0 0 16 14"><g shape-rendering="geometricPrecision"><path d="M0.300 5.200L6.300 0.200V3.600H8.500Q15 3.600 15 8.800Q15 13.200 9.500 14L8.600 11.600Q12.300 11 12.300 8.800Q12.300 6.600 8.500 6.600H6.300V10.200Z" fill="#ae88cc"/></g></svg>
<svg style="left:467px;top:112px" width="16" height="14" viewBox="0 0 16 14"><g shape-rendering="geometricPrecision" transform="translate(16 0) scale(-1 1)"><path d="M0.300 5.200L6.300 0.200V3.600H8.500Q15 3.600 15 8.800Q15 13.200 9.500 14L8.600 11.600Q12.300 11 12.300 8.800Q12.300 6.600 8.500 6.600H6.300V10.200Z" fill="#ae88cc"/></g></svg>
<div class="a" style="left:488px;top:109px;width:1px;height:19px;background:#a0a0a0;"></div>
<svg style="left:496px;top:113px" width="14" height="14" viewBox="0 0 14 14" shape-rendering="crispEdges"><path d="M6 0.500h-5.500v9h3" fill="none" stroke="#c9a070" stroke-width="1" shape-rendering="geometricPrecision"/><path d="M8 2.500h-5.500v9h2" fill="none" stroke="#c9a070" stroke-width="1" shape-rendering="geometricPrecision"/><g shape-rendering="geometricPrecision"><circle cx="7.8" cy="6.5" r="3.2" fill="#b9d9ea" stroke="#828282" stroke-width="1.3"/><path d="M10.04 8.74l2.6 2.6" stroke="#828282" stroke-width="1.6" stroke-linecap="round"/></g></svg>
<svg style="left:517px;top:113px" width="16" height="14" viewBox="0 0 16 14" shape-rendering="crispEdges"><path d="M6 0.500h-4.500v5" fill="none" stroke="#c9a070" stroke-width="1" shape-rendering="geometricPrecision"/><path d="M0.500 13L3.500 6L6.500 13M1.800 10.500h3.400" fill="none" stroke="#a0a0a0" stroke-width="1.200" shape-rendering="geometricPrecision"/><g shape-rendering="geometricPrecision"><circle cx="9.8" cy="6" r="3.2" fill="#b9d9ea" stroke="#828282" stroke-width="1.3"/><path d="M12.040000000000001 8.24l2.4 2.4" stroke="#828282" stroke-width="1.6" stroke-linecap="round"/></g></svg>
<div class="a" style="left:537px;top:109px;width:1px;height:19px;background:#a0a0a0;"></div>
<svg style="left:544px;top:112px" width="13" height="14" viewBox="0 0 13 14"><text x="0" y="12" font-family="Liberation Sans" font-weight="normal" font-size="12" fill="#3a3a3a" stroke="#3a3a3a" stroke-width="0.300" shape-rendering="geometricPrecision">a</text><path d="M7 0h5.500L9.800 3z" fill="#4a84c4" shape-rendering="geometricPrecision"/></svg>
<svg style="left:566px;top:112px" width="13" height="14" viewBox="0 0 13 14"><text x="0" y="13.500" font-family="Liberation Sans" font-weight="normal" font-size="12.500" fill="#3a3a3a" stroke="#3a3a3a" stroke-width="0.300" shape-rendering="geometricPrecision">A</text><path d="M7.500 3h5.500L10.200 0z" fill="#4a84c4" shape-rendering="geometricPrecision"/></svg>
<svg style="left:216px;top:133px" width="16" height="16" viewBox="0 0 16 16" shape-rendering="crispEdges"><path d="M3 1L8 5.500L3 10zM8 1L14 6L8 11z" fill="#22b14c" shape-rendering="geometricPrecision"/><g shape-rendering="geometricPrecision"><g fill="#8c8c8c"><rect x="3.8" y="5.3999999999999995" width="2.400" height="9.600" transform="rotate(0 5 10.2)"/><rect x="3.8" y="5.3999999999999995" width="2.400" height="9.600" transform="rotate(45 5 10.2)"/><rect x="3.8" y="5.3999999999999995" width="2.400" height="9.600" transform="rotate(90 5 10.2)"/><rect x="3.8" y="5.3999999999999995" width="2.400" height="9.600" transform="rotate(135 5 10.2)"/></g><circle cx="5" cy="10.2" r="3.400" fill="#8c8c8c"/><circle cx="5" cy="10.2" r="2" fill="#e6e6e6"/></g><circle cx="5" cy="10.200" r="1.100" fill="#22b14c" shape-rendering="geometricPrecision"/></svg>
<svg style="left:242px;top:134px" width="8" height="12" viewBox="0 0 8 12"><path d="M0.300 0.500L6.300 6L0.300 11.700z" fill="#22b14c" shape-rendering="geometricPrecision"/></svg>
<svg style="left:260px;top:133px" width="16" height="15" viewBox="0 0 16 15" shape-rendering="crispEdges"><path d="M6.500 2.500h8q1.500 0 1.500 1.200h-2.500v8.500q0 1.300-1.300 1.300h-6.500q-1.200 0-1.200-1.300h2z" fill="#f8f8f8" stroke="#9a9a9a" stroke-width="1" shape-rendering="geometricPrecision"/><rect x="7" y="5" width="5" height="6" fill="#ffd95e"/><rect x="8" y="6" width="3" height="1" fill="#4a88c8"/><rect x="8" y="8" width="3" height="1" fill="#4a88c8"/><rect x="7" y="11" width="5" height="1" fill="#cfe0f0"/><path d="M0.500 1.500L6.500 7L0.500 12.500z" fill="#22b14c" shape-rendering="geometricPrecision"/></svg>
<svg style="left:282px;top:133px" width="16" height="15" viewBox="0 0 16 15" shape-rendering="crispEdges"><rect x="0" y="2" width="13" height="11" fill="#9d9d9d"/><path d="M1 4l5 4l-5 4M7 9h5M7 11h5" stroke="#b4b4b4" stroke-width="1" fill="none" shape-rendering="geometricPrecision"/><path d="M7 8L14.500 0.500L14.500 4L9.500 9zM1 13v2l2-2z" fill="#9d9d9d" shape-rendering="geometricPrecision"/></svg>
<svg style="left:304px;top:134px" width="14" height="13" viewBox="0 0 14 13" shape-rendering="crispEdges"><rect x="0" y="0" width="11" height="2" fill="#4ea6dc"/><rect x="1" y="1" width="9" height="1" fill="#9ad4f4"/><rect x="0" y="2" width="1" height="9" fill="#b0b0b0"/><rect x="10" y="2" width="1" height="2" fill="#b0b0b0"/><rect x="8" y="3" width="1" height="9" fill="#7a7a7a"/><rect x="6" y="6" width="6" height="1" fill="#7a7a7a"/><rect x="8" y="3" width="4" height="1" fill="#7a7a7a"/><rect x="8" y="11" width="4" height="1" fill="#7a7a7a"/><rect x="11" y="1" width="3" height="3" fill="#7a6a4a"/><rect x="12" y="2" width="1" height="1" fill="#f2b860"/><rect x="11" y="5" width="3" height="3" fill="#7a6a4a"/><rect x="12" y="6" width="1" height="1" fill="#f2b860"/><rect x="11" y="9.5" width="3" height="3" fill="#7a6a4a"/><rect x="12" y="10.5" width="1" height="1" fill="#f2b860"/><path d="M0.500 2.500L6.500 7.500L0.500 12.500z" fill="#22b14c" shape-rendering="geometricPrecision"/></svg>
<div class="sb" style="left:322px;top:130px;height:23px;background:#cce4f7"></div>
<svg style="left:324px;top:134px" width="16" height="16" viewBox="0 0 16 16"><g shape-rendering="geometricPrecision"><circle cx="9.500" cy="8.500" r="4.300" fill="none" stroke="#1f6fd4" stroke-width="2.400"/><path d="M0.500 3L6.500 8.500L0.500 14z" fill="#22b14c"/><path d="M6 5.500l3-1.500l1.500 5.500l-2.500 1.500z" fill="#f4f6fa"/><path d="M8.500 4.500l3.500-2.500q3 0.500 3.300 3.500q0.200 2.500-1.300 3.300l-4 1.200z" fill="#f6c27c"/><path d="M10 8.500l4-1.200" stroke="#e0a050" stroke-width="0.700"/></g></svg>
<svg style="left:349px;top:135px" width="12" height="12" viewBox="0 0 12 12"><circle cx="6" cy="6" r="6" fill="#9d9d9d" shape-rendering="geometricPrecision"/><path d="M3.300 3.300L8.700 8.700M8.700 3.300L3.300 8.700" stroke="#b9b9b9" stroke-width="1.600" shape-rendering="geometricPrecision"/></svg>
<div class="a" style="left:368px;top:131px;width:1px;height:21px;background:#a0a0a0;"></div>
<svg style="left:375px;top:134px" width="13" height="13" viewBox="0 0 13 13"><g shape-rendering="geometricPrecision"><rect x="0.500" y="0" width="12" height="13" rx="1.800" fill="#9d9d9d"/><path d="M3 4h5M3 6.500h7M3 9h5M8.500 2.500l2 1.500l-2 1.500" stroke="#b2b2b2" fill="none"/></g></svg>
<svg style="left:397px;top:134px" width="13" height="13" viewBox="0 0 13 13"><g shape-rendering="geometricPrecision"><rect x="0.500" y="0" width="12" height="13" rx="1.800" fill="#9d9d9d"/><path d="M4 8.500h5v-4M7 6l2-2l2 2M0 6l1.500-1.500" stroke="#b2b2b2" fill="none"/></g></svg>
<svg style="left:419px;top:134px" width="13" height="13" viewBox="0 0 13 13"><g shape-rendering="geometricPrecision"><rect x="0.500" y="0" width="12" height="13" rx="1.800" fill="#9d9d9d"/><path d="M10 4h-5q-2 0-2 2.500t2 2.500h5M6 6.500h4" stroke="#b2b2b2" fill="none"/></g></svg>
<svg style="left:440px;top:133px" width="16" height="16" viewBox="0 0 16 16"><g shape-rendering="geometricPrecision"><path d="M10.500 3.300l3-3M13 5.800l3-3" stroke="#9d9d9d" stroke-width="1.400"/><path d="M0.500 15.500L5 11" stroke="#8c8c8c" stroke-width="1.400"/><path d="M8 2L14.500 8.500L12.500 9L9 12.500Q7 13.500 5 11.500T4 7.500L7.500 4z" fill="#9d9d9d"/></g></svg>
<svg style="left:461px;top:133px" width="17" height="16" viewBox="0 0 17 16" shape-rendering="crispEdges"><rect x="0" y="1" width="8" height="1" fill="#9d9d9d"/><rect x="0" y="3" width="8" height="2" fill="#9d9d9d"/><rect x="0" y="6" width="8" height="9" fill="#9d9d9d"/><g shape-rendering="geometricPrecision"><path d="M11 3.300l3-3M13.500 5.800l3-3" stroke="#9d9d9d" stroke-width="1.400"/><path d="M8.500 2L15 8.500L13 9L9.500 12.500L7 14L4 11z" fill="#9d9d9d"/><circle cx="4.500" cy="9.500" r="2.600" fill="#9d9d9d" stroke="#b4b4b4" stroke-width="0.800"/><path d="M3 9.500h3" stroke="#b4b4b4" stroke-width="1"/></g></svg>
<svg style="left:483px;top:133px" width="16" height="16" viewBox="0 0 16 16" shape-rendering="crispEdges"><rect x="6" y="1" width="9" height="1" fill="#8a8a8a"/><rect x="6" y="3" width="9" height="2" fill="#8a8a8a"/><rect x="6" y="6" width="9" height="2" fill="#8a8a8a"/><rect x="6" y="9" width="9" height="6" fill="#8a8a8a"/><rect x="12" y="11" width="1" height="1" fill="#1fd12f"/><path d="M0.500 9h5v-2.500l5 4.500l-5 4.500v-2.500h-5l2-2z" fill="#ffcf4a" stroke="#d99a26" stroke-width="1" shape-rendering="geometricPrecision"/></svg>
<div class="a" style="left:505px;top:131px;width:1px;height:21px;background:#a0a0a0;"></div>
<div class="sb" style="left:508px;top:130px;height:23px"></div><div class="sb" style="left:530px;top:130px;height:23px"></div>
<svg style="left:511px;top:133px" width="16" height="16" viewBox="0 0 16 16" shape-rendering="crispEdges"><rect x="0" y="4" width="13" height="12" fill="#a4a4a4"/><rect x="0" y="4" width="5" height="3" fill="#4aa0d8"/><rect x="1" y="5" width="3" height="1" fill="#d8ecf8"/><rect x="1" y="8.0" width="3" height="1.7" fill="#fff"/><rect x="1" y="10.7" width="3" height="1.7" fill="#fff"/><rect x="1" y="13.4" width="3" height="1.7" fill="#fff"/><rect x="5" y="8.0" width="3" height="1.7" fill="#fff"/><rect x="5" y="10.7" width="3" height="1.7" fill="#fff"/><rect x="5" y="13.4" width="3" height="1.7" fill="#fff"/><rect x="9" y="8.0" width="3" height="1.7" fill="#fff"/><rect x="9" y="10.7" width="3" height="1.7" fill="#fff"/><rect x="9" y="13.4" width="3" height="1.7" fill="#fff"/><rect x="4" y="0" width="12" height="11" fill="#6f604e"/><rect x="5" y="1" width="6" height="9" fill="#f3ead4"/><rect x="12" y="1" width="3" height="3" fill="#f3ead4"/><rect x="12" y="5" width="3" height="1" fill="#f3ead4"/><rect x="12" y="7" width="3" height="3" fill="#f3ead4"/><rect x="6" y="2" width="1" height="1" fill="#6f604e"/><rect x="8" y="2" width="2" height="1" fill="#6f604e"/><rect x="6" y="4" width="1" height="1" fill="#6f604e"/><rect x="8" y="4" width="2" height="1" fill="#6f604e"/><rect x="6" y="6" width="1" height="1" fill="#6f604e"/><rect x="8" y="6" width="2" height="1" fill="#6f604e"/><rect x="6" y="8" width="1" height="1" fill="#6f604e"/><rect x="8" y="8" width="2" height="1" fill="#6f604e"/><rect x="13" y="2" width="2" height="1" fill="#8a7a5a"/><rect x="13" y="8" width="2" height="1" fill="#8a7a5a"/></svg>
<svg style="left:533px;top:133px" width="16" height="16" viewBox="0 0 16 16" shape-rendering="crispEdges"><rect x="0" y="4" width="5" height="4" fill="#8a8a8a"/><rect x="1" y="5" width="3" height="2" fill="#ffc21a"/><rect x="0" y="9" width="4" height="3" fill="#8a8a8a"/><rect x="1" y="10" width="2" height="1" fill="#ffc21a"/><rect x="5" y="11" width="1" height="3" fill="#8a8a8a"/><rect x="7" y="11" width="4" height="1" fill="#6f604e"/><rect x="3" y="13" width="5" height="3" fill="#8a8a8a"/><rect x="4" y="14" width="3" height="1" fill="#ffc21a"/><rect x="4" y="0" width="12" height="11" fill="#6f604e"/><rect x="5" y="1" width="6" height="9" fill="#f3ead4"/><rect x="12" y="1" width="3" height="3" fill="#f3ead4"/><rect x="12" y="5" width="3" height="1" fill="#f3ead4"/><rect x="12" y="7" width="3" height="3" fill="#f3ead4"/><rect x="6" y="2" width="1" height="1" fill="#6f604e"/><rect x="8" y="2" width="2" height="1" fill="#6f604e"/><rect x="6" y="4" width="1" height="1" fill="#6f604e"/><rect x="8" y="4" width="2" height="1" fill="#6f604e"/><rect x="6" y="6" width="1" height="1" fill="#6f604e"/><rect x="8" y="6" width="2" height="1" fill="#6f604e"/><rect x="6" y="8" width="1" height="1" fill="#6f604e"/><rect x="8" y="8" width="2" height="1" fill="#6f604e"/><rect x="13" y="2" width="2" height="1" fill="#8a7a5a"/><rect x="13" y="8" width="2" height="1" fill="#8a7a5a"/></svg>
<svg style="left:556px;top:134px" width="16" height="14" viewBox="0 0 16 14" shape-rendering="crispEdges"><rect x="3" y="0" width="12" height="4" fill="#f4b942"/><rect x="4" y="1" width="10" height="2" fill="#ffd24a"/><rect x="8" y="4" width="1" height="5" fill="#7a7a7a"/><rect x="8" y="6" width="5" height="1" fill="#7a7a7a"/><rect x="11" y="6" width="4" height="2" fill="#f4b942"/><rect x="8" y="10" width="4" height="2" fill="#f4b942"/><g shape-rendering="geometricPrecision" fill="none" stroke="#2c9a4c" stroke-width="1.500"><path d="M1.500 7.500a3 3 0 0 1 5-1.500M6.500 10a3 3 0 0 1-5 1.500"/><path d="M5 4.500l2 1.500l-2.500 1M3 13l-2-1.500l2.500-1" stroke-width="1"/></g></svg>
<div class="a" style="left:576px;top:131px;width:1px;height:21px;background:#a0a0a0;"></div>
<svg style="left:581px;top:134px" width="16" height="14" viewBox="0 0 16 14" shape-rendering="crispEdges"><path d="M4.500 0.500h9q1.500 0 1.500 1.500h-2.500v4h-6.500v6.500q0 1.500-1.500 1.500h-2.500q-1.500 0-1.500-1.500v-1h2.500v-9.500q0-1.500 1.500-1.500z" fill="#f6f6f6" stroke="#9a9a9a" shape-rendering="geometricPrecision"/><rect x="6" y="3" width="5" height="1" fill="#8cc0e4"/><rect x="5" y="6" width="11" height="8" fill="#5a5a5a"/><rect x="6" y="7" width="9" height="6" fill="#f4f4f4"/><rect x="7" y="8" width="2" height="1" fill="#2f9e5a"/><rect x="10" y="8" width="4" height="1" fill="#3f7fc8"/><rect x="7" y="10" width="2" height="1" fill="#2f9e5a"/><rect x="10" y="10" width="4" height="1" fill="#3f7fc8"/></svg>
<svg style="left:604px;top:133px" width="16" height="15" viewBox="0 0 16 15" shape-rendering="crispEdges"><rect x="0" y="5" width="11" height="10" fill="#4a8a68"/><rect x="1" y="8" width="9" height="6" fill="#f4f4f4"/><rect x="3" y="9" width="1" height="4" fill="#4a8a68"/><rect x="5" y="9" width="3" height="1" fill="#4a8a68"/><rect x="7" y="10" width="1" height="1" fill="#4a8a68"/><rect x="5" y="11" width="3" height="1" fill="#4a8a68"/><rect x="5" y="12" width="1" height="1" fill="#4a8a68"/><rect x="5" y="13" width="3" height="1" fill="#4a8a68"/><g shape-rendering="geometricPrecision"><circle cx="11.500" cy="4.700" r="4" fill="#eaf4ee" stroke="#6aa88a" stroke-width="1.300"/><path d="M11.500 2.500v2.500l1.800 1.500" fill="none" stroke="#4a8a68" stroke-width="1"/></g></svg>
<div class="a" style="left:625px;top:131px;width:1px;height:21px;background:#a0a0a0;"></div>
<div class="a" style="left:630px;top:133px;width:86px;height:20px;background:#fff;border:1px solid #ababab;"></div>
<div class="t" style="left:635px;top:136px;font-size:11.5px;color:#7e7e7e;letter-spacing:-0.48px;">Max Results</div>
<svg style="left:283px;top:108px" width="100" height="32" viewBox="0 0 100 32"><path d="M3.500 0.500h93q3 0 3 3v16q0 3-3 3h-39.500l-6.300 8l-6.300-8h-40.900q-3 0-3-3v-16q0-3 3-3z" fill="#fff" stroke="#b4b4b4" stroke-width="1" shape-rendering="geometricPrecision"/></svg>
<div class="t" style="left:289px;top:112px;font-size:12.5px;letter-spacing:-0.13px;">Validator (Ctrl+I)</div>
<div class="t" style="left:218px;top:156px;font-size:11px;letter-spacing:0.09px;">Project:</div>
<div class="a" style="left:264px;top:154px;width:98px;height:20px;background:#fff;border:1px solid #9d9d9d;"></div>
<div class="t" style="left:266px;top:156px;font-size:11px;letter-spacing:0.09px;">ads-qa-testing</div>
<svg style="left:348px;top:163px" width="9" height="6" viewBox="0 0 9 6"><path d="M0.500 0.700L4.500 4.500L8.500 0.700" fill="none" stroke="#444" stroke-width="1.100" shape-rendering="geometricPrecision"/></svg>
<div class="t" style="left:375px;top:156px;font-size:11px;letter-spacing:-0.35px;">Schema:</div>
<div class="t" style="left:437px;top:156px;font-size:11px;letter-spacing:-0.20px;">Username:</div>
<div class="a" style="left:211px;top:178px;width:892px;height:235px;background:#fff;border:1px solid #bcbcbc;"></div>
<div class="a" style="left:212px;top:179px;width:46px;height:233px;background:#f0f0f0;"></div>
<div class="a" style="left:258px;top:179px;width:1px;height:233px;background:#e2e2e2;"></div>
<div class="a" style="left:212px;top:179px;width:890px;height:17px;background:#ffffe1;"></div>
<div class="a" style="left:258px;top:179px;width:1px;height:17px;background:#d8d8c8;"></div>
<div class="a" style="left:824px;top:179px;width:1px;height:233px;background:#d9d9d9;"></div>
<div class="t m" style="left:217px;top:181px;font-size:12px;color:#9c1c1c;">1</div>
<div class="t m" style="left:263.500px;top:181px;font-size:12px;letter-spacing:-0.200px"><span style="color:#00f">select</span> * <span style="color:#00f">from</span> tom.bistudio_example</div>
<div class="a" style="left:211px;top:413px;width:892px;height:21px;background:#f0f0f0;border:1px solid #bcbcbc;border-top:none;"></div>
<div class="t" style="left:221px;top:415px;font-size:11px;letter-spacing:0.01px;">[12/12/2019 1:01:54 PM] Script executed [Time: 1s]</div>
<div class="t" style="left:972px;top:415px;font-size:11px;letter-spacing:0.35px;">1:11</div>
<div class="t" style="left:1014px;top:415px;font-size:11px;letter-spacing:-0.68px;">CRLF</div>
<div class="t" style="left:1059px;top:415px;font-size:11px;letter-spacing:-0.43px;">UTF-8</div>
<svg style="left:1041px;top:419px" width="5" height="9" viewBox="0 0 5 9"><path d="M0 3.500L2.500 0.300L5 3.500zM0 5.500L2.500 8.700L5 5.500z" fill="#555" shape-rendering="geometricPrecision"/></svg>
<svg style="left:1090px;top:419px" width="5" height="9" viewBox="0 0 5 9"><path d="M0 3.500L2.500 0.300L5 3.500zM0 5.500L2.500 8.700L5 5.500z" fill="#555" shape-rendering="geometricPrecision"/></svg>
<div class="a" style="left:651px;top:437px;width:15px;height:2px;background:repeating-linear-gradient(90deg,#929292 0 1px,transparent 1px 2px)"></div>
<div class="a" style="left:210px;top:440px;width:894px;height:236px;background:#f0f0f0;border:1px solid #a0a0a0;border-top:2px solid #a4a4a4;"></div>
<div class="a" style="left:212px;top:442px;width:890px;height:211px;background:#fff;"></div>
<div class="a" style="left:212px;top:442px;width:42px;height:211px;background:#f0f0f0;"></div>
<div class="a" style="left:814px;top:442px;width:1px;height:211px;background:#d9d9d9;"></div>
<div class="a" style="left:1102px;top:442px;width:1px;height:232px;background:#b8b8b8;"></div>
<div class="t m" style="left:217px;top:445px;font-size:12px;color:#9c1c1c;">1</div>
<div class="t m" style="left:254px;top:445px;font-size:12px;letter-spacing:-0.200px;color:#1a1a1a">Validator Query: select * from tom.bistudio_example</div>
<div class="t m" style="left:217px;top:462px;font-size:12px;color:#9c1c1c;">2</div>
<div class="t m" style="left:254px;top:462px;font-size:12px;letter-spacing:-0.200px;color:#1a1a1a">Valid: This query will process 25.33789 KB when run.</div>
<div class="t m" style="left:217px;top:479px;font-size:12px;color:#9c1c1c;">3</div>
<div class="t m" style="left:217px;top:496px;font-size:12px;color:#9c1c1c;">4</div>
<svg style="left:1089px;top:445px" width="12" height="9" viewBox="0 0 12 9"><path d="M1 4.500L4 7.500L10.500 1" fill="none" stroke="#4da23c" stroke-width="2.200" shape-rendering="geometricPrecision"/></svg>
<div class="t" style="left:977px;top:655px;font-size:11px;letter-spacing:0.23px;">4:1</div>
<div class="t" style="left:1017px;top:655px;font-size:11px;color:#707070;letter-spacing:-0.93px;">CRLF</div>
<div class="t" style="left:1062px;top:655px;font-size:11px;color:#707070;letter-spacing:-0.23px;">UTF-8</div>
<div class="a" style="left:212px;top:653px;width:1px;height:21px;background:#c8c8c8;"></div>
<div class="a" style="left:1101px;top:653px;width:1px;height:21px;background:#c8c8c8;"></div>
<div class="a" style="left:212px;top:673px;width:890px;height:1px;background:#c8c8c8;"></div>
<div class="a" style="left:214px;top:675px;width:87px;height:21px;background:#e6e6e6;border:1px solid #a0a0a0;border-top:none;"></div>
<svg style="left:219px;top:679px" width="15" height="14" viewBox="0 0 15 14" shape-rendering="crispEdges"><rect x="0" y="0" width="15" height="14" fill="#8a8a8a"/><rect x="1" y="3" width="13" height="10" fill="#fbfbfb"/><rect x="0" y="0" width="15" height="3" fill="#4a7ab8"/><rect x="1" y="1" width="13" height="1" fill="#7aa4d8"/><rect x="2" y="5.0" width="2" height="1.3" fill="#6a6a6a"/><rect x="2" y="7.5" width="2" height="1.3" fill="#6a6a6a"/><rect x="2" y="10.0" width="2" height="1.3" fill="#6a6a6a"/><rect x="5" y="5.0" width="2" height="1.3" fill="#6a6a6a"/><rect x="5" y="7.5" width="2" height="1.3" fill="#6a6a6a"/><rect x="5" y="10.0" width="2" height="1.3" fill="#6a6a6a"/><rect x="8" y="5.0" width="2" height="1.3" fill="#6a6a6a"/><rect x="8" y="7.5" width="2" height="1.3" fill="#6a6a6a"/><rect x="8" y="10.0" width="2" height="1.3" fill="#6a6a6a"/><rect x="11" y="5.0" width="2" height="1.3" fill="#6a6a6a"/><rect x="11" y="7.5" width="2" height="1.3" fill="#6a6a6a"/><rect x="11" y="10.0" width="2" height="1.3" fill="#6a6a6a"/></svg>
<div class="t" style="left:238px;top:678px;font-size:11px;letter-spacing:-0.27px;">Messages</div>

</body></html>
